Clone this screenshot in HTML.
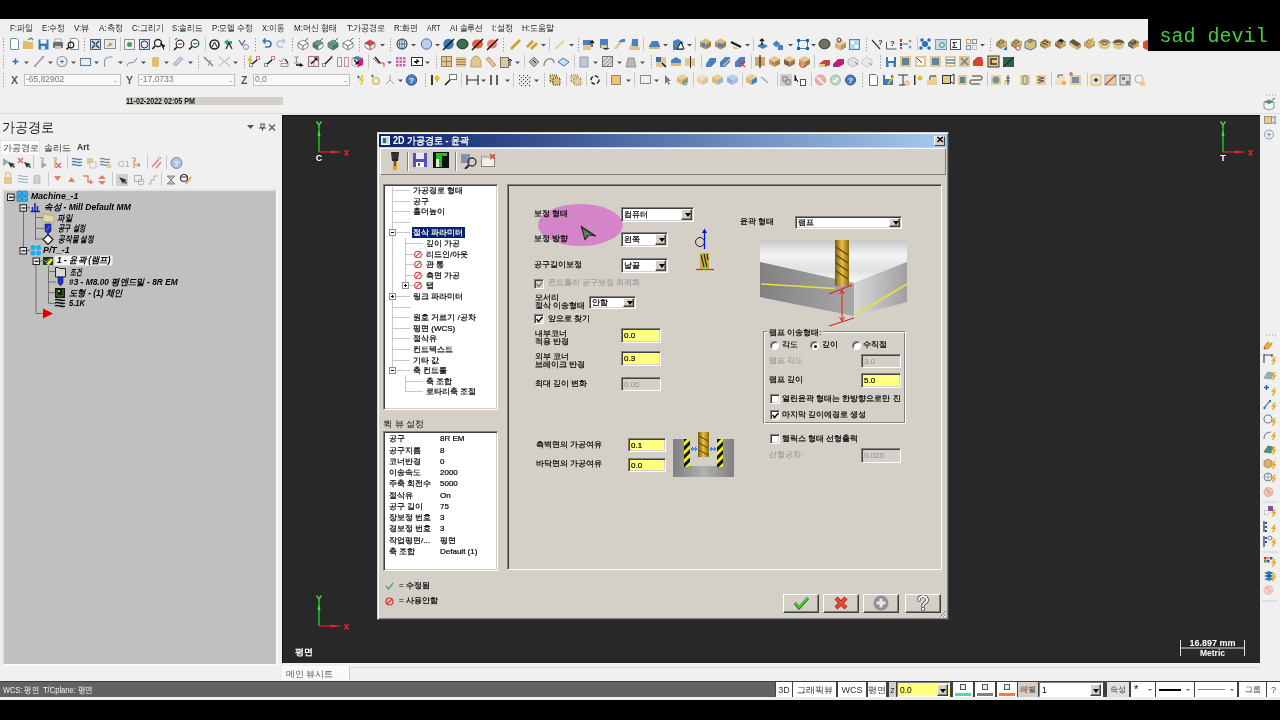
<!DOCTYPE html>
<html><head><meta charset="utf-8">
<style>
*{margin:0;padding:0;box-sizing:border-box}
html,body{width:1280px;height:720px;overflow:hidden;background:#000;font-family:"Liberation Sans",sans-serif;}
.a{position:absolute}
#app{position:absolute;left:0;top:19px;width:1280px;height:681px;background:#f0f0f0;overflow:hidden}
.menu span{position:absolute;top:5px;font-size:9px;color:#222;white-space:nowrap}
.t{position:absolute;white-space:nowrap}
.dt{font-size:8px;color:#000;line-height:12px;-webkit-text-stroke:0.2px currentColor}
.fld{border:1px solid;border-color:#808080 #fff #fff #808080;box-shadow:inset 1px 1px 0 #404040,inset -1px -1px 0 #d4d0c8}
.cbb{background:#d4d0c8;border:1px solid;border-color:#fff #404040 #404040 #fff;box-shadow:inset -1px -1px 0 #808080}
.lt{font-size:9px;font-weight:bold;font-style:italic;color:#000;line-height:12px}
.btn{background:#d4d0c8;border:1px solid;border-color:#fff #404040 #404040 #fff;box-shadow:inset -1px -1px 0 #808080}
</style></head><body>
<div id="app">
  <!-- menu -->
  </div>
<!-- TOOLBAR --><svg class="a" style="left:0;top:0" width="1280" height="100" viewBox="0 0 1280 100"><rect x="3" y="38" width="1" height="1.2" fill="#909090"/><rect x="3" y="41" width="1" height="1.2" fill="#909090"/><rect x="3" y="44" width="1" height="1.2" fill="#909090"/><rect x="3" y="47" width="1" height="1.2" fill="#909090"/><rect x="3" y="50" width="1" height="1.2" fill="#909090"/><path d="M10.5 38.5h6l2 2v9h-8z" fill="#fff" stroke="#7090a8"/><path d="M23 41h4l1 1h5v7h-10z" fill="#e8b860"/><path d="M28 40l3-2 2 2" stroke="#30a050" fill="none" stroke-width="1.3"/><rect x="38.5" y="39.5" width="10" height="10" fill="#3a78b8"/><rect x="40.5" y="39.5" width="6" height="4" fill="#fff"/><rect x="41" y="46" width="4" height="3.5" fill="#e8e8e8"/><rect x="53" y="42" width="10" height="6" rx="1" fill="#707070"/><rect x="55" y="39" width="6" height="3" fill="#fff" stroke="#777" stroke-width="0.6"/><rect x="55" y="46" width="6" height="3" fill="#c8c8c8"/><path d="M70.5 38.5h6l2 2v9h-8z" fill="#fff" stroke="#8090a0"/><circle cx="71" cy="45" r="2.8" fill="none" stroke="#222" stroke-width="1.2"/><path d="M69 47l-2.5 2.5" stroke="#111" stroke-width="1.5"/><rect x="84" y="38" width="1" height="1.2" fill="#909090"/><rect x="84" y="41" width="1" height="1.2" fill="#909090"/><rect x="84" y="44" width="1" height="1.2" fill="#909090"/><rect x="84" y="47" width="1" height="1.2" fill="#909090"/><rect x="84" y="50" width="1" height="1.2" fill="#909090"/><rect x="90.5" y="39.5" width="10" height="10" fill="#c8d8e8" stroke="#506070"/><path d="M92 41l3 3M99 41l-3 3M92 48l3-3M99 48l-3-3" stroke="#203040" stroke-width="1.2"/><rect x="104.5" y="39.5" width="11" height="9" fill="#e8e8e8" stroke="#8090a0"/><path d="M107 47l3-5 3 3" fill="#c8a050"/><rect x="120" y="37" width="1" height="14" fill="#c8c8c8"/><rect x="124.5" y="39.5" width="10" height="10" fill="none" stroke="#333" stroke-dasharray="1 1"/><circle cx="129.5" cy="44.5" r="2.5" fill="#40a060"/><rect x="139.5" y="39.5" width="10" height="10" fill="#e0e8f0" stroke="#506070"/><circle cx="144.5" cy="44.5" r="3.5" fill="none" stroke="#333"/><circle cx="158" cy="43" r="3.5" fill="#fff" stroke="#222" stroke-width="1.3"/><path d="M155 46l-2.5 3" stroke="#111" stroke-width="1.5"/><path d="M160 43l5 3-2 1 1 3" fill="#111" stroke="#111" stroke-width="0.8"/><rect x="169" y="37" width="1" height="14" fill="#c8c8c8"/><circle cx="180" cy="44" r="3.8" fill="#fff" stroke="#333" stroke-width="1.2"/><rect x="178" y="43.5" width="4" height="1.2" fill="#e03030"/><path d="M177 47l-3 3" stroke="#111" stroke-width="1.5"/><path d="M175 40l2-2" stroke="#40a060" stroke-width="1.5"/><circle cx="195" cy="43.5" r="3.8" fill="#fff" stroke="#333" stroke-width="1.2"/><rect x="193" y="43" width="4" height="1.2" fill="#e03030"/><path d="M192 46.5l-3 3" stroke="#111" stroke-width="1.5"/><rect x="205" y="37" width="1" height="14" fill="#c8c8c8"/><circle cx="214.5" cy="44.5" r="4.5" fill="none" stroke="#222" stroke-width="1.5"/><path d="M212 47l2.5-5 2.5 5" fill="none" stroke="#222"/><path d="M224 42l4-3v2h4v3h-4v2z" fill="#40a080"/><path d="M226 49l3-6 3 6" fill="none" stroke="#203050" stroke-width="1.3"/><path d="M239 40l3 5 3-5" fill="none" stroke="#506080" stroke-width="1.2"/><circle cx="246" cy="47" r="2.5" fill="none" stroke="#8090a0"/><rect x="255" y="38" width="1" height="1.2" fill="#909090"/><rect x="255" y="41" width="1" height="1.2" fill="#909090"/><rect x="255" y="44" width="1" height="1.2" fill="#909090"/><rect x="255" y="47" width="1" height="1.2" fill="#909090"/><rect x="255" y="50" width="1" height="1.2" fill="#909090"/><path d="M263 41h5a3 3 0 0 1 0 6h-3M263 41l2.5-2.5M263 41l2.5 2.5" fill="none" stroke="#3a70b0" stroke-width="1.6"/><path d="M285 41h-5a3 3 0 0 0 0 6h3M285 41l-2.5-2.5M285 41l-2.5 2.5" fill="none" stroke="#b0c0d0" stroke-width="1.4"/><rect x="292" y="38" width="1" height="1.2" fill="#909090"/><rect x="292" y="41" width="1" height="1.2" fill="#909090"/><rect x="292" y="44" width="1" height="1.2" fill="#909090"/><rect x="292" y="47" width="1" height="1.2" fill="#909090"/><rect x="292" y="50" width="1" height="1.2" fill="#909090"/><path d="M298 43.0L303.0 40.0L308 43.0L303.0 46.0Z" fill="#fff" stroke="#607080" stroke-width="0.8"/><path d="M298 43.0L303.0 46.0V50.0L298 47.0Z" fill="#fff" stroke="#607080" stroke-width="0.8"/><path d="M308 43.0L303.0 46.0V50.0L308 47.0Z" fill="#fff" stroke="#607080" stroke-width="0.8"/><path d="M305 41l3-3" stroke="#307050" stroke-width="1"/><path d="M313 43.0L318.0 40.0L323 43.0L318.0 46.0Z" fill="#60a080" stroke="#607080" stroke-width="0.8"/><path d="M313 43.0L318.0 46.0V50.0L313 47.0Z" fill="#408060" stroke="#607080" stroke-width="0.8"/><path d="M323 43.0L318.0 46.0V50.0L323 47.0Z" fill="#fff" stroke="#607080" stroke-width="0.8"/><path d="M320 41l3-3" stroke="#307050" stroke-width="1"/><path d="M328 43.0L333.0 40.0L338 43.0L333.0 46.0Z" fill="#60a080" stroke="#607080" stroke-width="0.8"/><path d="M328 43.0L333.0 46.0V50.0L328 47.0Z" fill="#60a080" stroke="#607080" stroke-width="0.8"/><path d="M338 43.0L333.0 46.0V50.0L338 47.0Z" fill="#408060" stroke="#607080" stroke-width="0.8"/><path d="M335 41l3-3" stroke="#307050" stroke-width="1"/><path d="M343 43.0L348.0 40.0L353 43.0L348.0 46.0Z" fill="#fff" stroke="#607080" stroke-width="0.8"/><path d="M343 43.0L348.0 46.0V50.0L343 47.0Z" fill="#fff" stroke="#607080" stroke-width="0.8"/><path d="M353 43.0L348.0 46.0V50.0L353 47.0Z" fill="#fff" stroke="#607080" stroke-width="0.8"/><path d="M350 41l3-3" stroke="#307050" stroke-width="1"/><rect x="359" y="38" width="1" height="1.2" fill="#909090"/><rect x="359" y="41" width="1" height="1.2" fill="#909090"/><rect x="359" y="44" width="1" height="1.2" fill="#909090"/><rect x="359" y="47" width="1" height="1.2" fill="#909090"/><rect x="359" y="50" width="1" height="1.2" fill="#909090"/><path d="M365 43.0L370.0 40.0L375 43.0L370.0 46.0Z" fill="#e04030" stroke="#806060" stroke-width="0.8"/><path d="M365 43.0L370.0 46.0V50.0L365 47.0Z" fill="#fff" stroke="#806060" stroke-width="0.8"/><path d="M375 43.0L370.0 46.0V50.0L375 47.0Z" fill="#e8e8e8" stroke="#806060" stroke-width="0.8"/><path d="M380 44h5l-2.5 2.5z" fill="#505050"/><rect x="390" y="38" width="1" height="1.2" fill="#909090"/><rect x="390" y="41" width="1" height="1.2" fill="#909090"/><rect x="390" y="44" width="1" height="1.2" fill="#909090"/><rect x="390" y="47" width="1" height="1.2" fill="#909090"/><rect x="390" y="50" width="1" height="1.2" fill="#909090"/><circle cx="402" cy="44" r="5" fill="#e0ecf4" stroke="#405870" stroke-width="1.2"/><path d="M397 44h10M402 39v10" stroke="#405870" stroke-width="0.8"/><ellipse cx="402" cy="44" rx="2.5" ry="5" fill="none" stroke="#405870" stroke-width="0.8"/><path d="M411 44h5l-2.5 2.5z" fill="#505050"/><circle cx="426.5" cy="44" r="5.2" fill="#b8d0ec" stroke="#5070a0" stroke-width="1"/><path d="M435 44h5l-2.5 2.5z" fill="#505050"/><circle cx="448.5" cy="44" r="5.2" fill="#3a78b8"/><path d="M443 50l11-11" stroke="#111" stroke-width="1.4"/><ellipse cx="462.5" cy="44" rx="5.5" ry="4.8" fill="#3a7050" stroke="#302010" stroke-width="1"/><ellipse cx="477.5" cy="44" rx="5.5" ry="4.5" fill="#e06040"/><path d="M472 50l11-11" stroke="#111" stroke-width="1.4"/><ellipse cx="492" cy="44" rx="5" ry="4.5" fill="#e88070"/><path d="M487 50l11-11" stroke="#111" stroke-width="1.4"/><rect x="503" y="38" width="1" height="1.2" fill="#909090"/><rect x="503" y="41" width="1" height="1.2" fill="#909090"/><rect x="503" y="44" width="1" height="1.2" fill="#909090"/><rect x="503" y="47" width="1" height="1.2" fill="#909090"/><rect x="503" y="50" width="1" height="1.2" fill="#909090"/><path d="M511 49L520 40" stroke="#d0a020" stroke-width="2.5"/><path d="M527 47L533 41" stroke="#d0a020" stroke-width="2.5"/><path d="M531 49L537 43" stroke="#d0a020" stroke-width="2.5"/><path d="M541 44h5l-2.5 2.5z" fill="#505050"/><rect x="549" y="37" width="1" height="14" fill="#c8c8c8"/><path d="M555 49L564 41" stroke="#e0d0a0" stroke-width="2.2"/><path d="M569 44h5l-2.5 2.5z" fill="#505050"/><rect x="578" y="38" width="1" height="1.2" fill="#909090"/><rect x="578" y="41" width="1" height="1.2" fill="#909090"/><rect x="578" y="44" width="1" height="1.2" fill="#909090"/><rect x="578" y="47" width="1" height="1.2" fill="#909090"/><rect x="578" y="50" width="1" height="1.2" fill="#909090"/><rect x="583" y="40" width="8" height="10" fill="#e0c890"/><rect x="583" y="40" width="8" height="5" fill="#4a80c0"/><path d="M592 47v-6l-2 2M592 41l2 2" stroke="#111" stroke-width="1.2" fill="none"/><rect x="600" y="39" width="8" height="9" fill="#4a80c0"/><path d="M602 48l4 2 4-2" fill="#333"/><rect x="601" y="45" width="6" height="3" fill="#e0c890"/><path d="M615 49l4-5 3-3" stroke="#e0c890" stroke-width="2.5"/><path d="M618 42l4-3h3v3z" fill="#4a80c0"/><path d="M629 50l3-10h5l3 10z" fill="#d8c090"/><rect x="632" y="39" width="6" height="7" fill="#4a80c0"/><rect x="643" y="37" width="1" height="14" fill="#c8c8c8"/><path d="M649 46l3-5h6l2 5v2h-11z" fill="#4a80c0"/><rect x="649" y="47" width="11" height="2" fill="#d8b878"/><path d="M663 44h5l-2.5 2.5z" fill="#505050"/><path d="M673 41l5-2 5 3v8h-10z" fill="#4a80c0"/><path d="M677 49l4-7 3 7z" fill="#fff" stroke="#111"/><path d="M687 44h5l-2.5 2.5z" fill="#505050"/><rect x="695" y="37" width="1" height="14" fill="#c8c8c8"/><path d="M700 41.5L705.5 38.5L711 41.5L705.5 44.5Z" fill="#d8b878"/><path d="M700 41.5L705.5 44.5V49.5L700 46.5Z" fill="#c09050"/><path d="M711 41.5L705.5 44.5V49.5L711 46.5Z" fill="#a07840"/><rect x="702" y="43" width="3" height="4" fill="#4a80c0"/><path d="M715 41.5L720.5 38.5L726 41.5L720.5 44.5Z" fill="#d8b878"/><path d="M715 41.5L720.5 44.5V49.5L715 46.5Z" fill="#c09050"/><path d="M726 41.5L720.5 44.5V49.5L726 46.5Z" fill="#a07840"/><rect x="718" y="43" width="3" height="4" fill="#4a80c0"/><path d="M731 42l10 5" stroke="#222" stroke-width="2.5"/><path d="M733 46l6 3h-5z" fill="#d8b878"/><path d="M745 44h5l-2.5 2.5z" fill="#505050"/><rect x="753" y="37" width="1" height="14" fill="#c8c8c8"/><path d="M757 46l5-3 6 3-5 3z" fill="#4a80c0"/><path d="M762 45v-6M760 41l2-2 2 2" stroke="#111" stroke-width="1.2" fill="none"/><path d="M773 43.5L776.5 40.5L780 43.5L776.5 46.5Z" fill="#4a80c0"/><path d="M773 43.5L776.5 46.5V47.5L773 44.5Z" fill="#3a70b0"/><path d="M780 43.5L776.5 46.5V47.5L780 44.5Z" fill="#5a90d0"/><rect x="778" y="45" width="5" height="5" fill="#4a80c0"/><path d="M788 44h5l-2.5 2.5z" fill="#505050"/><rect x="798.5" y="40.5" width="9" height="8" fill="none" stroke="#4a80c0" stroke-width="1"/><rect x="797" y="39" width="3" height="3" fill="#2a60a0"/><rect x="806" y="39" width="3" height="3" fill="#2a60a0"/><rect x="797" y="47" width="3" height="3" fill="#2a60a0"/><rect x="806" y="47" width="3" height="3" fill="#2a60a0"/><path d="M811 44h5l-2.5 2.5z" fill="#505050"/><ellipse cx="824.5" cy="44" rx="5.5" ry="4.8" fill="#707060" stroke="#333"/><path d="M835 42.5L840.5 39.5L846 42.5L840.5 45.5Z" fill="#e8d090"/><path d="M835 42.5L840.5 45.5V50.5L835 47.5Z" fill="#d8b878"/><path d="M846 42.5L840.5 45.5V50.5L846 47.5Z" fill="#b89858"/><circle cx="839" cy="40" r="2" fill="none" stroke="#333"/><rect x="849.5" y="39.5" width="10" height="10" fill="#b8d4ec" stroke="#6080a0"/><rect x="851" y="41" width="3" height="3" fill="#fff"/><rect x="855" y="45" width="3" height="3" fill="#fff"/><rect x="866" y="38" width="1" height="1.2" fill="#909090"/><rect x="866" y="41" width="1" height="1.2" fill="#909090"/><rect x="866" y="44" width="1" height="1.2" fill="#909090"/><rect x="866" y="47" width="1" height="1.2" fill="#909090"/><rect x="866" y="50" width="1" height="1.2" fill="#909090"/><path d="M872 40L880 49" stroke="#333" stroke-width="1.2"/><text x="878" y="45" font-size="8" font-family="Liberation Sans" font-weight="bold" fill="#333">?</text><path d="M886.5 42v7h10" fill="none" stroke="#555"/><text x="890" y="46" font-size="8" font-family="Liberation Sans" font-weight="bold" fill="#333">?</text><rect x="900" y="39" width="2" height="3" fill="#e03030"/><rect x="900" y="43" width="2" height="3" fill="#3050a0"/><rect x="900" y="47" width="2" height="2" fill="#e03030"/><path d="M903 44h5" stroke="#3070c0"/><circle cx="910" cy="41" r="1.5" fill="#999"/><circle cx="910" cy="47" r="1.5" fill="#999"/><rect x="917" y="37" width="1" height="14" fill="#c8c8c8"/><circle cx="925" cy="44" r="3" fill="#2a70c0"/><circle cx="922" cy="40" r="1.8" fill="#2a70c0"/><circle cx="929" cy="40" r="1.8" fill="#2a70c0"/><circle cx="921" cy="48" r="1.8" fill="#2a70c0"/><circle cx="929" cy="48" r="1.8" fill="#2a70c0"/><rect x="935.5" y="39.5" width="11" height="10" fill="#c8d8e8" stroke="#8098b0"/><circle cx="942" cy="45" r="2.5" fill="none" stroke="#40a060"/><rect x="950.5" y="39.5" width="10" height="10" fill="#fff" stroke="#555"/><text x="952" y="48" font-size="9" font-family="Liberation Sans" font-weight="bold" fill="#333">Σ</text><rect x="966.5" y="39.5" width="4" height="4" fill="none" stroke="#c8a060"/><rect x="972.5" y="39.5" width="4" height="4" fill="none" stroke="#7090b0"/><rect x="966.5" y="45.5" width="4" height="4" fill="none" stroke="#7090b0"/><rect x="972.5" y="45.5" width="4" height="4" fill="none" stroke="#c0c0c0"/><path d="M980 44h5l-2.5 2.5z" fill="#505050"/><rect x="990" y="38" width="1" height="1.2" fill="#909090"/><rect x="990" y="41" width="1" height="1.2" fill="#909090"/><rect x="990" y="44" width="1" height="1.2" fill="#909090"/><rect x="990" y="47" width="1" height="1.2" fill="#909090"/><rect x="990" y="50" width="1" height="1.2" fill="#909090"/><path d="M996 43l5-4 6 3-5 4z" fill="#d8c078" stroke="#706030" stroke-width="0.5"/><path d="M996 43v3l5 3v-3z" fill="#a88848"/><path d="M1001 46v3l6-3v-3z" fill="#c8a860"/><path d="M998 42.5l3-2 3 1.5-3 2z" fill="none" stroke="#403818" stroke-width="0.8"/><path d="M1003 50l4-4v4z" fill="#3a68b0"/><path d="M1011 43l5-4 6 3-5 4z" fill="#d8c078" stroke="#706030" stroke-width="0.5"/><path d="M1011 43v3l5 3v-3z" fill="#a88848"/><path d="M1016 46v3l6-3v-3z" fill="#c8a860"/><path d="M1013 42.5l3-2 3 1.5-3 2z" fill="none" stroke="#403818" stroke-width="0.8"/><circle cx="1018" cy="48" r="2.2" fill="#fff" stroke="#e03030" stroke-width="1"/><path d="M1025 42l5-3 6 2v6l-5 3-6-2z" fill="#d8c078" stroke="#4a6a90" stroke-width="0.9"/><path d="M1027 42l4-2 3 1-4 2z" fill="#8a7a40"/><path d="M1040 43l5-4 6 3-5 4z" fill="#d8c078" stroke="#706030" stroke-width="0.5"/><path d="M1040 43v3l5 3v-3z" fill="#a88848"/><path d="M1045 46v3l6-3v-3z" fill="#c8a860"/><path d="M1042 42.5l3-2 3 1.5-3 2z" fill="none" stroke="#403818" stroke-width="0.8"/><path d="M1042 43l6 2M1044 41l6 2" stroke="#403818" stroke-width="0.6"/><path d="M1055 43l5-4 6 3-5 4z" fill="#c8b070" stroke="#706030" stroke-width="0.5"/><path d="M1055 43v3l5 3v-3z" fill="#907040"/><path d="M1060 46v3l6-3v-3z" fill="#c8a860"/><path d="M1057 42.5l3-2 3 1.5-3 2z" fill="none" stroke="#403818" stroke-width="0.8"/><path d="M1058 41l3-2 3 1.5-3 2z" fill="#222"/><path d="M1069 42l4-3 8 5-4 3z" fill="#605838"/><path d="M1069 42v3l8 5v-3z" fill="#d8c078"/><path d="M1077 47v3l4-3v-3z" fill="#b89858"/><path d="M1084 43l5-4 6 3-5 4z" fill="#e8d090" stroke="#706030" stroke-width="0.5"/><path d="M1084 43v3l5 3v-3z" fill="#c0a060"/><path d="M1089 46v3l6-3v-3z" fill="#c8a860"/><path d="M1086 42.5l3-2 3 1.5-3 2z" fill="none" stroke="#806030" stroke-width="0.8"/><path d="M1090 43l3-5" stroke="#e0b020" stroke-width="1.6"/><ellipse cx="1104.5" cy="43" rx="5.5" ry="3.2" fill="#c8b078" stroke="#504828" stroke-width="0.7"/><path d="M1099 43v3a5.5 3.2 0 0 0 11 0v-3" fill="#e0c888"/><ellipse cx="1104.5" cy="43" rx="3" ry="1.6" fill="none" stroke="#404040" stroke-width="0.8"/><ellipse cx="1118.5" cy="43" rx="5.5" ry="3.2" fill="#807050" stroke="#404030" stroke-width="0.7"/><path d="M1113 43v3a5.5 3.2 0 0 0 11 0v-3" fill="#e0c888"/><ellipse cx="1118.5" cy="43" rx="3.5" ry="1.8" fill="none" stroke="#202020" stroke-width="0.8" stroke-dasharray="1 0.6"/><path d="M1128 43l5-4 6 3-5 4z" fill="#8a8468" stroke="#706030" stroke-width="0.5"/><path d="M1128 43v3l5 3v-3z" fill="#706850"/><path d="M1133 46v3l6-3v-3z" fill="#c8a860"/><path d="M1130 42.5l3-2 3 1.5-3 2z" fill="none" stroke="#202020" stroke-width="0.8"/><path d="M1131 42l3-2" stroke="#ddd" stroke-width="0.6"/><path d="M1143 42l4-2 4 2v6l-4 2-4-2z" fill="#e05030"/><rect x="3" y="55.5" width="1" height="1.2" fill="#909090"/><rect x="3" y="58.5" width="1" height="1.2" fill="#909090"/><rect x="3" y="61.5" width="1" height="1.2" fill="#909090"/><rect x="3" y="64.5" width="1" height="1.2" fill="#909090"/><rect x="3" y="67.5" width="1" height="1.2" fill="#909090"/><path d="M15.5 58.5v6M12.5 61.5h6" stroke="#2a70c0" stroke-width="1.6"/><path d="M24 61.5h5l-2.5 2.5z" fill="#505050"/><path d="M35 66L43 57" stroke="#909090" stroke-width="1.2"/><circle cx="35" cy="66" r="1" fill="#7090b0"/><circle cx="43" cy="57" r="1" fill="#7090b0"/><path d="M48 61.5h5l-2.5 2.5z" fill="#505050"/><circle cx="62" cy="61.5" r="5" fill="none" stroke="#8098b0" stroke-width="1.1"/><path d="M62 59.5v4M60 61.5h4" stroke="#5070a0"/><path d="M71 61.5h5l-2.5 2.5z" fill="#505050"/><rect x="80.5" y="58.5" width="10" height="7" fill="none" stroke="#6080a0" stroke-width="1.1"/><path d="M94 61.5h5l-2.5 2.5z" fill="#505050"/><path d="M104.5 67v-5a5 5 0 0 1 5-5h3" fill="none" stroke="#8098b0" stroke-width="1.1"/><path d="M118 61.5h5l-2.5 2.5z" fill="#505050"/><path d="M127 66c3-8 5 2 10-8" fill="none" stroke="#8098b0" stroke-width="1.1"/><path d="M141 61.5h5l-2.5 2.5z" fill="#505050"/><rect x="152" y="57" width="7" height="10" rx="2" fill="#e0c070"/><path d="M164 61.5h5l-2.5 2.5z" fill="#505050"/><path d="M173 64l7-7 3 2-7 7z" fill="#c0d0e0" stroke="#90a0b0" stroke-width="0.8"/><path d="M188 61.5h5l-2.5 2.5z" fill="#505050"/><rect x="198" y="55.5" width="1" height="1.2" fill="#909090"/><rect x="198" y="58.5" width="1" height="1.2" fill="#909090"/><rect x="198" y="61.5" width="1" height="1.2" fill="#909090"/><rect x="198" y="64.5" width="1" height="1.2" fill="#909090"/><rect x="198" y="67.5" width="1" height="1.2" fill="#909090"/><path d="M204 57L213 66" stroke="#a08060" stroke-width="1.6"/><path d="M208 66L211 60" stroke="#909090" stroke-width="1"/><path d="M219 57L230 66" stroke="#d0a080" stroke-width="1"/><path d="M230 57L219 66" stroke="#d0a080" stroke-width="1"/><path d="M233 61.5h5l-2.5 2.5z" fill="#505050"/><rect x="244" y="55.5" width="1" height="1.2" fill="#909090"/><rect x="244" y="58.5" width="1" height="1.2" fill="#909090"/><rect x="244" y="61.5" width="1" height="1.2" fill="#909090"/><rect x="244" y="64.5" width="1" height="1.2" fill="#909090"/><rect x="244" y="67.5" width="1" height="1.2" fill="#909090"/><path d="M251 56l-2 4h2l-1 3" stroke="#d8c020" stroke-width="2" fill="none"/><rect x="249.5" y="63.5" width="3" height="3" fill="none" stroke="#8898a8"/><rect x="256.5" y="56.5" width="3" height="3" fill="none" stroke="#d07898"/><path d="M252 64l5-4" stroke="#111" stroke-width="1.4"/><rect x="264.5" y="63.5" width="3" height="3" fill="none" stroke="#8898a8"/><rect x="271.5" y="56.5" width="3" height="3" fill="none" stroke="#d07898"/><path d="M267 64l5-4" stroke="#111" stroke-width="1.4"/><path d="M279 60l2 2 3-4" fill="none" stroke="#d07898" stroke-width="1"/><path d="M281 63.5h7v3h-7z" fill="none" stroke="#8898a8"/><path d="M285 59l3 4" stroke="#111" stroke-width="1.2"/><path d="M294 57h5M296.5 57v6M294 63h5" stroke="#8898a8" stroke-width="1.2"/><path d="M296 65h6l-2-1.5M302 65l-2 1.5" stroke="#111" stroke-width="1.3" fill="none"/><rect x="308.5" y="56.5" width="10" height="10" fill="none" stroke="#b07080" stroke-width="1.1"/><path d="M309 62h5v4" fill="none" stroke="#8898a8"/><path d="M311 64l6-6M314 58h3v3" stroke="#111" stroke-width="1.2" fill="none"/><rect x="322.5" y="63.5" width="3" height="3" fill="none" stroke="#8898a8"/><path d="M325 64l7-7" stroke="#111" stroke-width="1.3"/><path d="M330 57l3-1" stroke="#d07898" stroke-width="1.2"/><rect x="337.5" y="57.5" width="4" height="9" fill="none" stroke="#a090b8"/><rect x="344.5" y="57.5" width="4" height="9" fill="none" stroke="#c890a8"/><path d="M352 58l5-2 6 2-5 2z" fill="#4a80c0"/><path d="M352 58l6 2v7l-6-2z" fill="#fff" stroke="#333" stroke-width="0.4"/><path d="M363 58l-5 2v7l5-2z" fill="#c02870"/><path d="M354 60l4 4M358 64h-3M358 64v-3" stroke="#111" stroke-width="1.2" fill="none"/><rect x="368" y="54.5" width="1" height="14" fill="#c8c8c8"/><path d="M373 58l5 5h6v4" fill="none" stroke="#c04070" stroke-width="1"/><path d="M375 57l5 6" stroke="#111" stroke-width="1.3"/><path d="M387 61.5h5l-2.5 2.5z" fill="#505050"/><rect x="396.0" y="57.0" width="2.5" height="2.5" fill="#d060b0"/><rect x="396.0" y="60.5" width="2.5" height="2.5" fill="#d060b0"/><rect x="396.0" y="64.0" width="2.5" height="2.5" fill="#d060b0"/><rect x="399.5" y="57.0" width="2.5" height="2.5" fill="#d060b0"/><rect x="399.5" y="60.5" width="2.5" height="2.5" fill="#d060b0"/><rect x="399.5" y="64.0" width="2.5" height="2.5" fill="#d060b0"/><rect x="403.0" y="57.0" width="2.5" height="2.5" fill="#d060b0"/><rect x="403.0" y="60.5" width="2.5" height="2.5" fill="#d060b0"/><rect x="403.0" y="64.0" width="2.5" height="2.5" fill="#d060b0"/><rect x="411.5" y="57.5" width="11" height="8" fill="#fff" stroke="#333"/><path d="M414 61.5h5l-2-2v4z" fill="#111" stroke="#111"/><path d="M425 61.5h5l-2.5 2.5z" fill="#505050"/><rect x="436" y="55.5" width="1" height="1.2" fill="#909090"/><rect x="436" y="58.5" width="1" height="1.2" fill="#909090"/><rect x="436" y="61.5" width="1" height="1.2" fill="#909090"/><rect x="436" y="64.5" width="1" height="1.2" fill="#909090"/><rect x="436" y="67.5" width="1" height="1.2" fill="#909090"/><rect x="441.5" y="56.5" width="10" height="10" fill="#e0c890" stroke="#a08050"/><path d="M446.5 57v9M442 61.5h9" stroke="#a08050"/><rect x="456" y="57" width="10" height="10" fill="#e0c890"/><path d="M456 59.5h10M456 62h10M456 64.5h10" stroke="#a08050"/><path d="M471 67v-4a5 7 0 0 1 10 0v4z" fill="#e0c890" stroke="#b09060" stroke-width="0.8"/><path d="M486 59l3-2 7 8-3 2z" fill="#e8c0a0" stroke="#c08060" stroke-width="0.8"/><rect x="500.5" y="57.5" width="8" height="10" fill="#d8c8a8" stroke="#807060"/><path d="M510 66v-7M508 61l2-2 2 2" stroke="#222" fill="none"/><path d="M515 61.5h5l-2.5 2.5z" fill="#505050"/><rect x="524" y="54.5" width="1" height="14" fill="#c8c8c8"/><path d="M529 62l5-5 5 5-5 5z" fill="#b0b0b0" stroke="#707070" stroke-width="0.8"/><path d="M533 60l3 3" stroke="#333"/><path d="M544 66c0-8 10-10 10-3" fill="none" stroke="#909090" stroke-width="1.5"/><path d="M558 62l5-4 6 4-5 4z" fill="#d0e0f0" stroke="#3a70b0" stroke-width="1"/><rect x="574" y="54.5" width="1" height="14" fill="#c8c8c8"/><rect x="580" y="57" width="8" height="10" fill="#c0c8d0" stroke="#8090a0" stroke-width="0.8"/><path d="M593 61.5h5l-2.5 2.5z" fill="#505050"/><rect x="602.5" y="56.5" width="10" height="10" fill="#d8d8d0" stroke="#707070"/><path d="M603 66l9-9M603 62l5-5M607 66l5-5" stroke="#909080"/><path d="M617 61.5h5l-2.5 2.5z" fill="#505050"/><path d="M626 67l2-9h6l2 9z" fill="#b8b8b8" stroke="#888" stroke-width="0.8"/><path d="M640 61.5h5l-2.5 2.5z" fill="#505050"/><rect x="651" y="55.5" width="1" height="1.2" fill="#909090"/><rect x="651" y="58.5" width="1" height="1.2" fill="#909090"/><rect x="651" y="61.5" width="1" height="1.2" fill="#909090"/><rect x="651" y="64.5" width="1" height="1.2" fill="#909090"/><rect x="651" y="67.5" width="1" height="1.2" fill="#909090"/><rect x="656" y="57" width="10" height="10" fill="#e0c890"/><rect x="656" y="57" width="5" height="5" fill="#3a70b0"/><path d="M662 63l4 4" stroke="#111" stroke-width="1.5"/><path d="M671 60l5-3 5 3v6h-10z" fill="#4a80c0"/><rect x="671" y="63" width="10" height="3" fill="#d8b878"/><rect x="685" y="58" width="10" height="8" fill="#e0c890"/><path d="M690.5 56v12" stroke="#333"/><rect x="701" y="54.5" width="1" height="14" fill="#c8c8c8"/><path d="M706 64l4-6h6v4l-5 5h-5z" fill="#4a80c0"/><path d="M720 62l5-5h5v5l-5 5h-5z" fill="#4a80c0"/><path d="M723 66l7-7" stroke="#d8b878" stroke-width="1.5"/><path d="M735 62l5-5h5v5l-5 5h-5z" fill="#4a80c0"/><path d="M740 62l5 5M745 62l-5 5" stroke="#e03030" stroke-width="1.2"/><rect x="751" y="54.5" width="1" height="14" fill="#c8c8c8"/><rect x="755" y="57" width="10" height="9" fill="#c8a870"/><path d="M760 55v13" stroke="#223" stroke-width="1.2"/><path d="M769 59.0L774.5 56.0L780 59.0L774.5 62.0Z" fill="#e8c888"/><path d="M769 59.0L774.5 62.0V67.0L769 64.0Z" fill="#c8a060"/><path d="M780 59.0L774.5 62.0V67.0L780 64.0Z" fill="#a88040"/><path d="M772 62l2 2" stroke="#e03030"/><path d="M784 59.0L789.5 56.0L795 59.0L789.5 62.0Z" fill="#e8c888"/><path d="M784 59.0L789.5 62.0V67.0L784 64.0Z" fill="#806040"/><path d="M795 59.0L789.5 62.0V67.0L795 64.0Z" fill="#a88040"/><path d="M790 65l4-3" stroke="#6060c0"/><path d="M799 59.0L804.5 56.0L810 59.0L804.5 62.0Z" fill="#e8c888"/><path d="M799 59.0L804.5 62.0V67.0L799 64.0Z" fill="#c8a060"/><path d="M810 59.0L804.5 62.0V67.0L810 64.0Z" fill="#a88040"/><path d="M800 63a3 3 0 0 0 6 2" fill="none" stroke="#e04020" stroke-width="1.3"/><rect x="814" y="54.5" width="1" height="14" fill="#c8c8c8"/><path d="M819 64l5-4h6v5l-5 2h-6z" fill="#d04040"/><path d="M819 64h6v3h-6z" fill="#e8c888"/><path d="M833 64l5-5h6v5l-5 3h-6z" fill="#c02070"/><path d="M848 60l5-3 5 3v4l-5 3-5-3z" fill="#e0e0e0" stroke="#b0b0b0" stroke-width="0.8"/><path d="M855 62l3 3" stroke="#7070c0"/><path d="M862 60l5-3 5 3v4l-5 3-5-3z" fill="#e8e8e8" stroke="#c0c0c0" stroke-width="0.8"/><path d="M869 63l3 2" stroke="#8080d0"/><rect x="880" y="55.5" width="1" height="1.2" fill="#909090"/><rect x="880" y="58.5" width="1" height="1.2" fill="#909090"/><rect x="880" y="61.5" width="1" height="1.2" fill="#909090"/><rect x="880" y="64.5" width="1" height="1.2" fill="#909090"/><rect x="880" y="67.5" width="1" height="1.2" fill="#909090"/><rect x="886" y="57" width="10" height="10" fill="#3a78b8"/><rect x="888" y="57" width="6" height="4" fill="#fff"/><rect x="888.5" y="63" width="5" height="4" fill="#e8e8e8"/><rect x="900" y="56" width="11" height="11" fill="#e0c890"/><rect x="902" y="58" width="7" height="7" fill="#6080a0"/><rect x="915" y="56" width="11" height="11" fill="#e0c890"/><rect x="917" y="58" width="7" height="7" fill="#fff"/><rect x="930" y="56" width="11" height="11" fill="#e0c890"/><rect x="932" y="58" width="7" height="7" fill="#6080a0"/><rect x="945" y="56" width="11" height="11" fill="#e0c890"/><rect x="947" y="58" width="7" height="7" fill="#fff"/><path d="M917 58l5 5" stroke="#333"/><path d="M946 60h9M946 63h9" stroke="#6080a0" stroke-width="1.5"/><rect x="959" y="56" width="11" height="11" fill="#e0c890"/><path d="M961 58l7 7M968 58l-7 7" stroke="#6080b0" stroke-width="1.5"/><path d="M973 61l4-4h5l1 4v5h-10z" fill="#d04830"/><rect x="988" y="56" width="11" height="11" fill="#e0c890" stroke="#403020"/><path d="M997 59h-6v5h6" fill="none" stroke="#403020" stroke-width="1.5"/><rect x="1003" y="57" width="11" height="10" fill="#306050"/><path d="M1003 67l11-10" stroke="#111" stroke-width="1"/><rect x="3" y="73.5" width="1" height="1.2" fill="#909090"/><rect x="3" y="76.5" width="1" height="1.2" fill="#909090"/><rect x="3" y="79.5" width="1" height="1.2" fill="#909090"/><rect x="3" y="82.5" width="1" height="1.2" fill="#909090"/><rect x="3" y="85.5" width="1" height="1.2" fill="#909090"/><text x="11" y="84" font-size="10.5" font-weight="bold" font-family="Liberation Sans" fill="#555">X</text><rect x="24.5" y="74.5" width="96" height="11" fill="#f8f8f8" stroke="#c0c0c0"/><text x="26" y="81.5" font-size="8.5" font-family="Liberation Sans" fill="#7a7a7a">-65,82902</text><path d="M114 81h3l-1.5 1.5z" fill="#aaa"/><text x="126" y="84" font-size="10.5" font-weight="bold" font-family="Liberation Sans" fill="#555">Y</text><rect x="138.5" y="74.5" width="96" height="11" fill="#f8f8f8" stroke="#c0c0c0"/><text x="140" y="81.5" font-size="8.5" font-family="Liberation Sans" fill="#7a7a7a">-17,0733</text><path d="M229 81h3l-1.5 1.5z" fill="#aaa"/><text x="241" y="84" font-size="10.5" font-weight="bold" font-family="Liberation Sans" fill="#555">Z</text><rect x="253.5" y="74.5" width="96" height="11" fill="#f8f8f8" stroke="#c0c0c0"/><text x="255" y="81.5" font-size="8.5" font-family="Liberation Sans" fill="#7a7a7a">0,0</text><path d="M344 81h3l-1.5 1.5z" fill="#aaa"/><path d="M357 77h3M358.5 75.5v3" stroke="#4070c0"/><path d="M363 75l-3 5h3l-2 5" fill="none" stroke="#e8c020" stroke-width="1.5"/><circle cx="376" cy="81" r="3.2" fill="none" stroke="#e0c070" stroke-width="1.8"/><path d="M371 76h3M372.5 74.5v3" stroke="#4070c0"/><path d="M390 80v-5M390 80l-4 4M390 80l4 4" stroke="#a0a0a0"/><path d="M398 79.5h5l-2.5 2.5z" fill="#505050"/><circle cx="411.5" cy="80" r="5.2" fill="#4a80c0" stroke="#305080"/><text x="409" y="83" font-size="8" font-weight="bold" font-family="Liberation Sans" fill="#fff">?</text><rect x="425" y="73.5" width="1" height="1.2" fill="#909090"/><rect x="425" y="76.5" width="1" height="1.2" fill="#909090"/><rect x="425" y="79.5" width="1" height="1.2" fill="#909090"/><rect x="425" y="82.5" width="1" height="1.2" fill="#909090"/><rect x="425" y="85.5" width="1" height="1.2" fill="#909090"/><rect x="431" y="75" width="2" height="10" fill="#333"/><circle cx="437" cy="78" r="2.5" fill="#e8c020"/><rect x="436" y="80" width="2" height="2" fill="#e8c020"/><rect x="449.5" y="74.5" width="7" height="5" fill="#fff" stroke="#777"/><path d="M445 85l5-5" stroke="#111" stroke-width="1.5"/><rect x="461" y="72.5" width="1" height="14" fill="#c8c8c8"/><path d="M467 75v10M478 75v10M467 80h11" stroke="#333" stroke-width="1.2"/><path d="M481 79.5h5l-2.5 2.5z" fill="#505050"/><path d="M491 75v10M497 75v10" stroke="#333" stroke-width="1.5"/><path d="M505 79.5h5l-2.5 2.5z" fill="#505050"/><rect x="513" y="72.5" width="1" height="14" fill="#c8c8c8"/><rect x="519" y="75" width="1.2" height="1.2" fill="#444"/><rect x="519" y="79" width="1.2" height="1.2" fill="#444"/><rect x="519" y="83" width="1.2" height="1.2" fill="#444"/><rect x="521" y="77" width="1.2" height="1.2" fill="#444"/><rect x="521" y="81" width="1.2" height="1.2" fill="#444"/><rect x="521" y="85" width="1.2" height="1.2" fill="#444"/><rect x="523" y="75" width="1.2" height="1.2" fill="#444"/><rect x="523" y="79" width="1.2" height="1.2" fill="#444"/><rect x="523" y="83" width="1.2" height="1.2" fill="#444"/><rect x="525" y="77" width="1.2" height="1.2" fill="#444"/><rect x="525" y="81" width="1.2" height="1.2" fill="#444"/><rect x="525" y="85" width="1.2" height="1.2" fill="#444"/><rect x="527" y="75" width="1.2" height="1.2" fill="#444"/><rect x="527" y="79" width="1.2" height="1.2" fill="#444"/><rect x="527" y="83" width="1.2" height="1.2" fill="#444"/><rect x="529" y="77" width="1.2" height="1.2" fill="#444"/><rect x="529" y="81" width="1.2" height="1.2" fill="#444"/><rect x="529" y="85" width="1.2" height="1.2" fill="#444"/><path d="M534 79.5h5l-2.5 2.5z" fill="#505050"/><rect x="544" y="73.5" width="1" height="1.2" fill="#909090"/><rect x="544" y="76.5" width="1" height="1.2" fill="#909090"/><rect x="544" y="79.5" width="1" height="1.2" fill="#909090"/><rect x="544" y="82.5" width="1" height="1.2" fill="#909090"/><rect x="544" y="85.5" width="1" height="1.2" fill="#909090"/><rect x="550" y="75" width="7" height="7" fill="#e0c070" stroke="#333" stroke-dasharray="1 1"/><rect x="553" y="78" width="7" height="7" fill="#e0c070" stroke="#333" stroke-dasharray="1 1"/><rect x="566" y="72.5" width="1" height="14" fill="#c8c8c8"/><rect x="571" y="75" width="7" height="7" fill="#e0d0a0" stroke="#8a7050" stroke-dasharray="1 1"/><rect x="574" y="78" width="7" height="7" fill="#e0d0a0" stroke="#8a7050" stroke-dasharray="1 1"/><rect x="586" y="72.5" width="1" height="14" fill="#c8c8c8"/><circle cx="595" cy="80" r="4" fill="none" stroke="#222" stroke-width="1.5" stroke-dasharray="4 2"/><rect x="606" y="72.5" width="1" height="14" fill="#c8c8c8"/><rect x="611.5" y="75.5" width="9" height="9" fill="#f0c070" stroke="#333" stroke-dasharray="1 1"/><path d="M626 79.5h5l-2.5 2.5z" fill="#505050"/><rect x="634" y="72.5" width="1" height="14" fill="#c8c8c8"/><rect x="640.5" y="75.5" width="10" height="8" fill="none" stroke="#222" stroke-dasharray="1 1"/><path d="M654 79.5h5l-2.5 2.5z" fill="#505050"/><path d="M665 75v9l2-2 2 3 1-1-2-3h3z" fill="#707880"/><path d="M677 77.0L682.5 74.0L688 77.0L682.5 80.0Z" fill="#e8d090"/><path d="M677 77.0L682.5 80.0V85.0L677 82.0Z" fill="#d8b878"/><path d="M688 77.0L682.5 80.0V85.0L688 82.0Z" fill="#b89858"/><circle cx="685" cy="83" r="2" fill="none" stroke="#40a0a0"/><rect x="693" y="72.5" width="1" height="14" fill="#c8c8c8"/><path d="M697 77.0L702.5 74.0L708 77.0L702.5 80.0Z" fill="#f0e0c0"/><path d="M697 77.0L702.5 80.0V85.0L697 82.0Z" fill="#e8d0a0"/><path d="M708 77.0L702.5 80.0V85.0L708 82.0Z" fill="#d8c090"/><path d="M712 77.0L717.5 74.0L723 77.0L717.5 80.0Z" fill="#e8d090"/><path d="M712 77.0L717.5 80.0V85.0L712 82.0Z" fill="#d8b878"/><path d="M723 77.0L717.5 80.0V85.0L723 82.0Z" fill="#9ab0c8"/><path d="M727 77.0L732.5 74.0L738 77.0L732.5 80.0Z" fill="#b8d0e8"/><path d="M727 77.0L732.5 80.0V85.0L727 82.0Z" fill="#90b0d8"/><path d="M738 77.0L732.5 80.0V85.0L738 82.0Z" fill="#a8c0e0"/><rect x="742" y="72.5" width="1" height="14" fill="#c8c8c8"/><path d="M746 77.0L751.5 74.0L757 77.0L751.5 80.0Z" fill="#e8d090"/><path d="M746 77.0L751.5 80.0V85.0L746 82.0Z" fill="#d8b878"/><path d="M757 77.0L751.5 80.0V85.0L757 82.0Z" fill="#4a80c0"/><path d="M761 77l3 2 4 4" stroke="#90b0c0" stroke-width="1.5"/><rect x="777" y="72.5" width="1" height="14" fill="#c8c8c8"/><rect x="780" y="74" width="12" height="12" fill="#d0d0d0"/><circle cx="785" cy="79" r="2.5" fill="none" stroke="#999" stroke-width="1.5"/><circle cx="788" cy="82" r="2.5" fill="none" stroke="#999" stroke-width="1.5"/><path d="M795 75v6l1.5-1.5 1.5 2.5" fill="#111" stroke="#111"/><rect x="800.5" y="79.5" width="5" height="6" fill="#fff" stroke="#555"/><rect x="811" y="72.5" width="1" height="14" fill="#c8c8c8"/><circle cx="820.5" cy="80" r="5" fill="#f0b0b0" stroke="#e09090"/><path d="M817 77l7 7" stroke="#fff" stroke-width="1.5"/><circle cx="835.5" cy="80" r="5" fill="#b8d8c8" stroke="#90b8a8"/><path d="M833 80l2 2 3-4" stroke="#fff" stroke-width="1.5" fill="none"/><circle cx="850.5" cy="80" r="5" fill="#4a80c0" stroke="#305080"/><text x="848" y="83" font-size="8" font-weight="bold" font-family="Liberation Sans" fill="#fff">?</text><rect x="862" y="73.5" width="1" height="1.2" fill="#909090"/><rect x="862" y="76.5" width="1" height="1.2" fill="#909090"/><rect x="862" y="79.5" width="1" height="1.2" fill="#909090"/><rect x="862" y="82.5" width="1" height="1.2" fill="#909090"/><rect x="862" y="85.5" width="1" height="1.2" fill="#909090"/><path d="M869.5 74.5h6l2 2v9h-8z" fill="#fff" stroke="#607080"/><rect x="883" y="75" width="10" height="10" fill="#3a78b8"/><rect x="885" y="75" width="6" height="4" fill="#fff"/><path d="M888 84l6-8" stroke="#e8c020" stroke-width="1.8"/><path d="M898 75h10M903 75v10M899 85h6" stroke="#333" stroke-width="1"/><circle cx="907" cy="83" r="2" fill="none" stroke="#e0a030"/><rect x="914" y="75" width="1.5" height="10" fill="#333"/><circle cx="920" cy="78" r="2.5" fill="#e8c020"/><path d="M927 85v-5h5v-5h5v10z" fill="#e8d090"/><path d="M930 80v-4h6" fill="none" stroke="#333"/><rect x="942.5" y="75.5" width="8" height="8" fill="#e8c888" stroke="#333"/><path d="M951 76l3-2v10l-3-2" fill="none" stroke="#333"/><rect x="958" y="75" width="9" height="10" fill="#e0c890"/><rect x="960" y="77" width="5" height="6" fill="#6080a0"/><path d="M972 76h8a2 2 0 0 1 0 4h-8a2 2 0 0 0 0 4h8" fill="none" stroke="#807060" stroke-width="1.3"/><rect x="987" y="72.5" width="1" height="14" fill="#c8c8c8"/><rect x="991" y="75" width="10" height="10" fill="#e8d090"/><circle cx="996" cy="80" r="3.5" fill="#7090b0"/><path d="M1008 85v-10M1006 78h4M1006 81h4" stroke="#555" stroke-width="1.2"/><rect x="1004" y="80" width="2" height="5" fill="#e8d090"/><rect x="1020" y="75" width="10" height="10" fill="#e8d090"/><rect x="1023" y="75.5" width="4" height="9" rx="2" fill="none" stroke="#6080a0"/><rect x="1036" y="75" width="10" height="10" fill="#e8d090"/><path d="M1038 77l6 1-6 2 6 1-6 2" fill="none" stroke="#555"/><rect x="1051" y="72.5" width="1" height="14" fill="#c8c8c8"/><path d="M1055 85v-6h4v-4h6v10z" fill="#f0e0c0"/><path d="M1058 78v-3h5" fill="none" stroke="#555"/><circle cx="1064" cy="83" r="2" fill="#e8b020"/><rect x="1070" y="75" width="11" height="10" fill="#e8d090"/><rect x="1072" y="77" width="7" height="6" fill="#7090b0"/><circle cx="1071" cy="74" r="1.3" fill="none" stroke="#e03030"/><rect x="1087" y="72.5" width="1" height="14" fill="#c8c8c8"/><rect x="1091" y="75" width="10" height="10" fill="#f0e0c0" stroke="#d8b878"/><path d="M1096 78v4M1094 80h4" stroke="#203070" stroke-width="1.5"/><rect x="1105" y="75" width="11" height="10" fill="#e0d0b0" stroke="#a0a0a0"/><path d="M1105 85l11-10" stroke="#d04030" stroke-width="1.2"/><rect x="1120" y="75" width="10" height="10" fill="#d8d8d8" stroke="#707070"/><rect x="1122" y="77" width="3" height="3" fill="#6080a0"/><rect x="1126" y="81" width="3" height="3" fill="#6080a0"/><circle cx="1139" cy="79" r="4" fill="#f0f0f0" stroke="#b0b0b0"/><rect x="1140" y="81" width="5" height="5" rx="2" fill="#f0c880"/></svg><!-- /TOOLBAR -->
<!-- date bar -->
<div class="a" style="left:126px;top:97px;width:157px;height:8px;background:#d4d0c8"></div>
<div class="a" style="left:0;top:113px;width:1280px;height:1px;background:#dedede"></div>
<div class="t" style="left:126px;top:96px;font-size:8.5px;font-weight:bold;line-height:10px;color:#111;transform:scaleX(0.839);transform-origin:0 0">11-02-2022 02:05 PM</div>

<!-- left panel -->
<div class="t" style="left:2px;top:119px;font-size:14px;color:#222;transform:scaleX(0.94);transform-origin:0 0">가공경로</div>
<div class="a" style="left:0;top:140px;width:40px;height:14px;background:#fcfcfc;border:1px solid #e4e4e4;border-bottom:none"></div>
<div class="t" style="left:3px;top:142px;font-size:9px;color:#333">가공경로</div>
<div class="t" style="left:43.5px;top:142px;font-size:9px;color:#333">솔리드</div>
<div class="t" style="left:77px;top:142px;font-size:8.5px;font-weight:bold;color:#333">Art</div>
<div class="a" style="left:2px;top:189px;width:276px;height:477px;background:#c0c0c0;border:2px solid;border-color:#e4e4e4 #fafafa #fafafa #e4e4e4"></div>

<!-- viewport -->
<div class="a" style="left:282px;top:115px;width:978px;height:548px;background:#282828;border-top:1px solid #111;border-left:1px solid #111"></div>
<div class="a" style="left:283px;top:667px;width:977px;height:1px;background:#ddd"></div>

<!-- status bar -->
<div class="a" style="left:0;top:681px;width:1280px;height:16px;background:#626262;border-top:1px solid #3c3c3c"></div>
<div class="a" style="left:0;top:697px;width:1280px;height:3px;background:#ececec"></div>
<div class="t" style="left:2.5px;top:685px;font-size:9px;line-height:11px;color:#f4f4f4;transform:scaleX(0.818);transform-origin:0 0">WCS: 평면</div><div class="t" style="left:42.5px;top:685px;font-size:9px;line-height:11px;color:#f4f4f4;transform:scaleX(0.840);transform-origin:0 0">T/Cplane: 평면</div>

<!-- sad devil -->
<div class="a" style="left:1148px;top:0;width:132px;height:51px;background:#000"></div>
<div class="t" style="left:1159.5px;top:25px;font-family:'Liberation Mono',monospace;font-size:20px;line-height:24px;color:#48c848;">sad devil</div>


<!-- dialog -->
<div class="a" style="left:377px;top:132px;width:572px;height:488px;background:#d4d0c8;border:1px solid;border-color:#d4d0c8 #404040 #404040 #d4d0c8;box-shadow:inset 1px 1px 0 #fff,inset -1px -1px 0 #808080"></div>
<div class="a" style="left:379px;top:134px;width:568px;height:13px;background:linear-gradient(to right,#0a246a,#a6caf0)"></div>
<div class="a" style="left:381px;top:136px;width:9px;height:9px;background:#c0d8e8;border:1px solid #fff"><div class="a" style="left:1px;top:1px;width:3px;height:5px;background:#4a6a4a"></div></div>
<div class="t" style="left:393px;top:134px;font-size:10px;line-height:13px;font-weight:bold;color:#fff;transform:scaleX(0.90);transform-origin:0 0">2D 가공경로 - 윤곽</div>
<div class="a" style="left:934px;top:136px;width:11px;height:10px;background:#d4d0c8;border:1px solid;border-color:#fff #404040 #404040 #fff"><div class="t" style="left:1px;top:-3px;font-size:10px;font-weight:bold;color:#000">✕</div></div>

<!-- dialog toolbar -->
<div class="a" style="left:380px;top:148px;width:566px;height:27px;border:1px solid;border-color:#fff #808080 #808080 #fff"></div>
<div class="a" style="left:407px;top:152px;width:2px;height:19px;border-left:1px solid #808080;border-right:1px solid #fff"></div>
<div class="a" style="left:455px;top:152px;width:2px;height:19px;border-left:1px solid #808080;border-right:1px solid #fff"></div>
<svg class="a" style="left:388px;top:151px" width="14" height="20" viewBox="0 0 14 20"><path d="M3 1h8l-1 9H4z" fill="#222"/><path d="M4 3h6M4 5h6M4 7h6" stroke="#555" stroke-width="0.6"/><rect x="5" y="10" width="4" height="9" fill="#e0a020"/><rect x="6" y="10" width="2" height="5" fill="#555"/></svg>
<svg class="a" style="left:412px;top:152px" width="16" height="16" viewBox="0 0 16 16"><rect x="1" y="1" width="14" height="14" fill="#5050c0"/><rect x="4" y="1" width="8" height="6" fill="#e8e8f8"/><rect x="4" y="10" width="8" height="5" fill="#fff"/><rect x="6" y="11" width="2" height="3" fill="#5050c0"/></svg>
<svg class="a" style="left:433px;top:152px" width="16" height="16" viewBox="0 0 16 16"><rect x="0" y="0" width="16" height="16" fill="#111"/><path d="M3 1h11v3H9v11H6V7H3z" fill="#20c020"/><rect x="3" y="7" width="3" height="8" fill="#e0f0e0"/></svg>
<svg class="a" style="left:461px;top:154px" width="17" height="15" viewBox="0 0 17 15"><rect x="0" y="0" width="9" height="9" fill="#8090b0"/><circle cx="11" cy="8" r="4" fill="none" stroke="#333" stroke-width="1.3"/><path d="M8 11L4 15" stroke="#222" stroke-width="2"/></svg>
<svg class="a" style="left:481px;top:154px" width="15" height="13" viewBox="0 0 15 13"><rect x="0.5" y="2.5" width="13" height="10" fill="#f4f0e8" stroke="#888"/><rect x="0.5" y="2.5" width="13" height="2" fill="#ccc"/><path d="M9 0l5 5M14 0l-5 5" stroke="#e04040" stroke-width="1.5"/></svg>

<!-- tree box -->
<div class="a" style="left:383px;top:184px;width:115px;height:226px;background:#fff;border:1px solid;border-color:#808080 #fff #fff #808080;box-shadow:inset 1px 1px 0 #404040,inset -1px -1px 0 #d4d0c8"></div>
<div class="t" style="left:383px;top:418px;font-size:9px;color:#111">퀵 뷰 설정</div>
<div class="a" style="left:383px;top:431px;width:115px;height:140px;background:#fff;border:1px solid;border-color:#808080 #fff #fff #808080;box-shadow:inset 1px 1px 0 #404040,inset -1px -1px 0 #d4d0c8"></div>

<!-- DTREE --><svg class="a" style="left:0;top:0" width="500" height="420" viewBox="0 0 500 420"><path d="M392.5 187V370.5M405.5 238V285.5M405.5 375V391.5" stroke="#c8c8c8" fill="none"/><path d="M392 190.5H410" stroke="#c8c8c8"/><path d="M392 201.5H410" stroke="#c8c8c8"/><path d="M392 211.5H410" stroke="#c8c8c8"/><path d="M392 222.5H410" stroke="#c8c8c8"/><path d="M392 232.5H410" stroke="#c8c8c8"/><rect x="389.5" y="229.5" width="6" height="6" fill="#fff" stroke="#909090"/><path d="M391.0 232.5h3" stroke="#000"/><path d="M405 243.5H423" stroke="#c8c8c8"/><path d="M405 254.5H423" stroke="#c8c8c8"/><circle cx="418" cy="254.5" r="3.3" fill="#fff" stroke="#e04040" stroke-width="1.1"/><path d="M415.8 256.7L420.2 252.3" stroke="#e04040" stroke-width="1.1"/><path d="M405 264.5H423" stroke="#c8c8c8"/><circle cx="418" cy="264.5" r="3.3" fill="#fff" stroke="#e04040" stroke-width="1.1"/><path d="M415.8 266.7L420.2 262.3" stroke="#e04040" stroke-width="1.1"/><path d="M405 275.5H423" stroke="#c8c8c8"/><circle cx="418" cy="275.5" r="3.3" fill="#fff" stroke="#e04040" stroke-width="1.1"/><path d="M415.8 277.7L420.2 273.3" stroke="#e04040" stroke-width="1.1"/><path d="M405 285.5H423" stroke="#c8c8c8"/><rect x="402.5" y="282.5" width="6" height="6" fill="#fff" stroke="#909090"/><path d="M404.0 285.5h3" stroke="#000"/><path d="M405.5 284v3" stroke="#000"/><circle cx="418" cy="285.5" r="3.3" fill="#fff" stroke="#e04040" stroke-width="1.1"/><path d="M415.8 287.7L420.2 283.3" stroke="#e04040" stroke-width="1.1"/><path d="M392 296.5H410" stroke="#c8c8c8"/><rect x="389.5" y="293.5" width="6" height="6" fill="#fff" stroke="#909090"/><path d="M391.0 296.5h3" stroke="#000"/><path d="M392.5 295v3" stroke="#000"/><path d="M392 307.5H410" stroke="#c8c8c8"/><path d="M392 317.5H410" stroke="#c8c8c8"/><path d="M392 328.5H410" stroke="#c8c8c8"/><path d="M392 338.5H410" stroke="#c8c8c8"/><path d="M392 349.5H410" stroke="#c8c8c8"/><path d="M392 360.5H410" stroke="#c8c8c8"/><path d="M392 370.5H410" stroke="#c8c8c8"/><rect x="389.5" y="367.5" width="6" height="6" fill="#fff" stroke="#909090"/><path d="M391.0 370.5h3" stroke="#000"/><path d="M405 381.5H423" stroke="#c8c8c8"/><path d="M405 391.5H423" stroke="#c8c8c8"/></svg>
<div class="t dt" style="left:413px;top:185px">가공경로 형태</div>
<div class="t dt" style="left:413px;top:196px">공구</div>
<div class="t dt" style="left:413px;top:206px">홀더높이</div>
<div class="a" style="left:412px;top:227px;width:53px;height:11px;background:#0a246a"></div>
<div class="t dt" style="left:413px;top:227px;color:#fff">절삭 파라미터</div>
<div class="t dt" style="left:426px;top:238px">깊이 가공</div>
<div class="t dt" style="left:426px;top:249px">리드인/아웃</div>
<div class="t dt" style="left:426px;top:259px">관 통</div>
<div class="t dt" style="left:426px;top:270px">측면 가공</div>
<div class="t dt" style="left:426px;top:280px">탭</div>
<div class="t dt" style="left:413px;top:291px">링크 파라미터</div>
<div class="t dt" style="left:413px;top:312px">원호 거르기 /공차</div>
<div class="t dt" style="left:413px;top:323px">평면 (WCS)</div>
<div class="t dt" style="left:413px;top:333px">절삭유</div>
<div class="t dt" style="left:413px;top:344px">컨트텍스트</div>
<div class="t dt" style="left:413px;top:355px">기타 값</div>
<div class="t dt" style="left:413px;top:365px">축 컨트롤</div>
<div class="t dt" style="left:426px;top:376px">축 조합</div>
<div class="t dt" style="left:426px;top:386px">로타리축 조절</div>
<div class="t dt" style="left:389px;top:433px">공구</div>
<div class="t dt" style="left:440px;top:433px">8R EM</div>
<div class="t dt" style="left:389px;top:445px">공구지름</div>
<div class="t dt" style="left:440px;top:445px">8</div>
<div class="t dt" style="left:389px;top:456px">코너반경</div>
<div class="t dt" style="left:440px;top:456px">0</div>
<div class="t dt" style="left:389px;top:467px">이송속도</div>
<div class="t dt" style="left:440px;top:467px">2000</div>
<div class="t dt" style="left:389px;top:478px">주축 회전수</div>
<div class="t dt" style="left:440px;top:478px">5000</div>
<div class="t dt" style="left:389px;top:490px">절삭유</div>
<div class="t dt" style="left:440px;top:490px">On</div>
<div class="t dt" style="left:389px;top:501px">공구 길이</div>
<div class="t dt" style="left:440px;top:501px">75</div>
<div class="t dt" style="left:389px;top:512px">장보정 번호</div>
<div class="t dt" style="left:440px;top:512px">3</div>
<div class="t dt" style="left:389px;top:523px">경보정 번호</div>
<div class="t dt" style="left:440px;top:523px">3</div>
<div class="t dt" style="left:389px;top:535px">작업평면/...</div>
<div class="t dt" style="left:440px;top:535px">평면</div>
<div class="t dt" style="left:389px;top:546px">축 조합</div>
<div class="t dt" style="left:440px;top:546px">Default (1)</div>
<svg class="a" style="left:385px;top:582px" width="9" height="8" viewBox="0 0 9 8"><path d="M1 4l2.5 3L8 1" fill="none" stroke="#50a050" stroke-width="1.3"/></svg>
<div class="t dt" style="left:399px;top:580px">= 수정됨</div>
<svg class="a" style="left:385px;top:597px" width="9" height="9" viewBox="0 0 9 9"><circle cx="4.5" cy="4.5" r="3.5" fill="none" stroke="#e03030" stroke-width="1.2"/><path d="M2 7L7 2" stroke="#e03030" stroke-width="1.2"/></svg>
<div class="t dt" style="left:399px;top:595px">= 사용안함</div><!-- /DTREE -->
<!-- right panel -->
<div class="a" style="left:507px;top:184px;width:435px;height:386px;border:1px solid;border-color:#808080 #fff #fff #808080;box-shadow:inset 1px 1px 0 #404040,inset -1px -1px 0 #d4d0c8"></div>

<!-- form -->
<div class="t dt" style="left:534px;top:208px;color:#000">보정 형태</div>
<div class="a fld" style="left:621px;top:207px;width:73px;height:15px;background:#fff"><div class="t dt" style="left:2px;top:1px">컴퓨터</div><div class="a cbb" style="right:1px;top:1px;width:11px;height:11px"><div class="a" style="left:3px;top:3px;width:0;height:0;border-left:3.5px solid transparent;border-right:3.5px solid transparent;border-top:4px solid #000"></div></div></div>
<div class="t dt" style="left:534px;top:233px;color:#000">보정 방향</div>
<div class="a fld" style="left:621px;top:232px;width:47px;height:15px;background:#fff"><div class="t dt" style="left:2px;top:1px">왼쪽</div><div class="a cbb" style="right:1px;top:1px;width:11px;height:11px"><div class="a" style="left:3px;top:3px;width:0;height:0;border-left:3.5px solid transparent;border-right:3.5px solid transparent;border-top:4px solid #000"></div></div></div>
<div class="t dt" style="left:534px;top:259px;color:#000">공구길이보정</div>
<div class="a fld" style="left:621px;top:258px;width:47px;height:15px;background:#fff"><div class="t dt" style="left:2px;top:1px">날끝</div><div class="a cbb" style="right:1px;top:1px;width:11px;height:11px"><div class="a" style="left:3px;top:3px;width:0;height:0;border-left:3.5px solid transparent;border-right:3.5px solid transparent;border-top:4px solid #000"></div></div></div>
<div class="a fld" style="left:534px;top:279px;width:10px;height:10px;background:#d4d0c8"><svg class="a" style="left:1px;top:1px" width="7" height="7" viewBox="0 0 7 7"><path d="M0.5 3l2 2.5L6.5 1" fill="none" stroke="#808080" stroke-width="1.5"/></svg></div>
<div class="t dt" style="left:548px;top:277px;color:#a0a0a0">콘트롤러 공구보정 최적화</div>
<div class="t dt" style="left:535px;top:292px;color:#000">모서리</div>
<div class="t dt" style="left:535px;top:300px;color:#000">절삭 이송형태</div>
<div class="a fld" style="left:589px;top:296px;width:47px;height:13px;background:#fff"><div class="t dt" style="left:2px;top:0px">안함</div><div class="a cbb" style="right:1px;top:1px;width:11px;height:9px"><div class="a" style="left:3px;top:2px;width:0;height:0;border-left:3.5px solid transparent;border-right:3.5px solid transparent;border-top:4px solid #000"></div></div></div>
<div class="a fld" style="left:534px;top:314px;width:10px;height:10px;background:#fff"><svg class="a" style="left:1px;top:1px" width="7" height="7" viewBox="0 0 7 7"><path d="M0.5 3l2 2.5L6.5 1" fill="none" stroke="#000" stroke-width="1.5"/></svg></div>
<div class="t dt" style="left:548px;top:313px;color:#000">앞으로 찾기</div>
<div class="t dt" style="left:535px;top:328px;color:#000">내부코너</div>
<div class="t dt" style="left:535px;top:336px;color:#000">적용 반경</div>
<div class="a fld" style="left:621px;top:328px;width:40px;height:15px;background:#ffff80"><div class="t dt" style="left:2px;top:1px;color:#000">0.0</div></div>
<div class="t dt" style="left:535px;top:351px;color:#000">외부 코너</div>
<div class="t dt" style="left:535px;top:359px;color:#000">브레이크 반경</div>
<div class="a fld" style="left:621px;top:351px;width:40px;height:15px;background:#ffff80"><div class="t dt" style="left:2px;top:1px;color:#000">0.3</div></div>
<div class="t dt" style="left:535px;top:378px;color:#000">최대 깊이 변화</div>
<div class="a fld" style="left:621px;top:377px;width:40px;height:14px;background:#d4d0c8"><div class="t dt" style="left:2px;top:1px;color:#a0a0a0">0.05</div></div>
<div class="t dt" style="left:536px;top:439px;color:#000">측벽면의 가공여유</div>
<div class="a fld" style="left:628px;top:438px;width:38px;height:14px;background:#ffff80"><div class="t dt" style="left:2px;top:1px;color:#000">0.1</div></div>
<div class="t dt" style="left:536px;top:458px;color:#000">바닥면의 가공여유</div>
<div class="a fld" style="left:628px;top:458px;width:38px;height:14px;background:#ffff80"><div class="t dt" style="left:2px;top:1px;color:#000">0.0</div></div>
<div class="t dt" style="left:740px;top:216px;color:#000">윤곽 형태</div>
<div class="a fld" style="left:795px;top:216px;width:107px;height:13px;background:#fff"><div class="t dt" style="left:2px;top:0px">램프</div><div class="a cbb" style="right:1px;top:1px;width:11px;height:9px"><div class="a" style="left:3px;top:2px;width:0;height:0;border-left:3.5px solid transparent;border-right:3.5px solid transparent;border-top:4px solid #000"></div></div></div>
<div class="a" style="left:763px;top:331px;width:143px;height:93px;border:1px solid;border-color:#808080 #fff #fff #808080;box-shadow:inset 1px 1px 0 #fff,inset -1px -1px 0 #808080"></div>
<div class="t dt" style="left:767px;top:327px;background:#d4d0c8;padding:0 2px">램프 이송형태:</div>
<div class="a" style="left:770px;top:341px;width:9px;height:9px;border-radius:50%;background:#fff;border:1px solid;border-color:#808080 #fff #fff #808080;box-shadow:inset 1px 1px 0 #404040"></div>
<div class="t dt" style="left:782px;top:339px;color:#000">각도</div>
<div class="a" style="left:810px;top:341px;width:9px;height:9px;border-radius:50%;background:#fff;border:1px solid;border-color:#808080 #fff #fff #808080;box-shadow:inset 1px 1px 0 #404040"><div class="a" style="left:2.5px;top:2.5px;width:3px;height:3px;border-radius:2px;background:#000"></div></div>
<div class="t dt" style="left:822px;top:339px;color:#000">깊이</div>
<div class="a" style="left:852px;top:341px;width:9px;height:9px;border-radius:50%;background:#fff;border:1px solid;border-color:#808080 #fff #fff #808080;box-shadow:inset 1px 1px 0 #404040"></div>
<div class="t dt" style="left:863px;top:339px;color:#000">수직절</div>
<div class="t dt" style="left:769px;top:355px;color:#a0a0a0">램프 각도</div>
<div class="a fld" style="left:861px;top:354px;width:40px;height:14px;background:#d4d0c8"><div class="t dt" style="left:2px;top:1px;color:#a0a0a0">3.0</div></div>
<div class="t dt" style="left:769px;top:374px;color:#000">램프 깊이</div>
<div class="a fld" style="left:861px;top:373px;width:40px;height:15px;background:#ffff80"><div class="t dt" style="left:2px;top:1px;color:#000">5.0</div></div>
<div class="a fld" style="left:770px;top:394px;width:10px;height:10px;background:#fff"></div>
<div class="t dt" style="left:782px;top:393px;color:#000">열린윤곽 형태는 한방향으로만 진</div>
<div class="a fld" style="left:770px;top:410px;width:10px;height:10px;background:#fff"><svg class="a" style="left:1px;top:1px" width="7" height="7" viewBox="0 0 7 7"><path d="M0.5 3l2 2.5L6.5 1" fill="none" stroke="#000" stroke-width="1.5"/></svg></div>
<div class="t dt" style="left:782px;top:409px;color:#000">마지막 깊이에경로 생성</div>
<div class="a fld" style="left:770px;top:434px;width:10px;height:10px;background:#fff"></div>
<div class="t dt" style="left:782px;top:433px;color:#000">헬릭스 형태 선형출력</div>
<div class="t dt" style="left:769px;top:449px;color:#a0a0a0">선형공차:</div>
<div class="a fld" style="left:861px;top:448px;width:40px;height:15px;background:#d4d0c8"><div class="t dt" style="left:2px;top:1px;color:#a0a0a0">0.025</div></div>
<!-- buttons -->
<div class="a btn" style="left:783px;top:594px;width:36px;height:19px"></div>
<div class="a btn" style="left:823px;top:594px;width:36px;height:19px"></div>
<div class="a btn" style="left:863px;top:594px;width:36px;height:19px"></div>
<div class="a btn" style="left:905px;top:594px;width:36px;height:19px"></div>

<!-- images -->
<div class="a" style="left:538px;top:204px;width:85px;height:42px;border-radius:50%;background:#ffa2ff;mix-blend-mode:multiply"></div>
<svg class="a" style="left:580px;top:225px" width="18" height="16" viewBox="0 0 18 16"><path d="M1 1L16 11L9 10L5 15Z" fill="#2a4a2a" stroke="#1a1a1a" stroke-width="0.8"/><path d="M3 4L11 10L7 10L5 13Z" fill="#5a8a5a"/></svg>
<svg class="a" style="left:694px;top:228px" width="16" height="22" viewBox="0 0 16 22"><circle cx="6" cy="14" r="4.5" fill="none" stroke="#222" stroke-width="1"/><path d="M10.5 21V3" stroke="#0010e0" stroke-width="1.3"/><path d="M8 5L10.5 0.5L13 5Z" fill="#0010e0"/></svg>
<svg class="a" style="left:696px;top:252px" width="18" height="20" viewBox="0 0 18 20"><path d="M4 1h9v16H4z" fill="#c8b040"/><path d="M5 3l3 12M8 2l3 13M11 2l1 6" stroke="#302810" stroke-width="1.2"/><path d="M0 17.5h18" stroke="#e02020" stroke-width="1.2"/><circle cx="8.5" cy="17.5" r="1.3" fill="#40e040"/></svg>
<!-- block image -->
<svg class="a" style="left:759px;top:239px" width="149" height="88" viewBox="0 0 149 88">
<defs>
<linearGradient id="gt" x1="0" y1="0" x2="0" y2="1"><stop offset="0" stop-color="#c8c8c8"/><stop offset="0.35" stop-color="#f4f4f4"/><stop offset="0.7" stop-color="#e0e0e0"/><stop offset="1" stop-color="#fafafa"/></linearGradient>
<linearGradient id="gl" x1="0" y1="0" x2="1" y2="0"><stop offset="0" stop-color="#808080"/><stop offset="1" stop-color="#a8a8a8"/></linearGradient>
<linearGradient id="gr" x1="0" y1="0" x2="1" y2="0"><stop offset="0" stop-color="#d8d8d8"/><stop offset="1" stop-color="#a0a0a0"/></linearGradient>
<linearGradient id="gd" x1="0" y1="0" x2="1" y2="0"><stop offset="0" stop-color="#7a5a10"/><stop offset="0.5" stop-color="#e8c040"/><stop offset="1" stop-color="#8a6a10"/></linearGradient>
</defs>
<path d="M1 1H148V23L95 44L1 23Z" fill="url(#gt)"/>
<path d="M1 23L95 44V77L1 58Z" fill="url(#gl)"/>
<path d="M95 44L148 23V63L95 77Z" fill="url(#gr)"/>
<path d="M2 45L76 49.5" stroke="#e8e040" stroke-width="1.5"/>
<path d="M96 76L148 45" stroke="#e8e040" stroke-width="1.5"/>
<rect x="76" y="1" width="14" height="46" fill="url(#gd)"/>
<path d="M77 8l12 8M77 16l12 8M77 24l12 8M77 32l12 8" stroke="#5a4008" stroke-width="1.2"/>
<path d="M70 55L93 46M70 87L95 79" stroke="#e02020" stroke-width="1.3"/>
<path d="M83 51V82" stroke="#e02020" stroke-width="1"/>
<path d="M80.5 55L83 51L85.5 55M80.5 78L83 82L85.5 78" fill="none" stroke="#e02020" stroke-width="1"/>
</svg>
<!-- pocket image -->
<svg class="a" style="left:673px;top:432px" width="61" height="45" viewBox="0 0 61 45">
<defs><linearGradient id="gp" x1="0" y1="0" x2="1" y2="0"><stop offset="0" stop-color="#808080"/><stop offset="0.5" stop-color="#b0b0b0"/><stop offset="1" stop-color="#808080"/></linearGradient>
<pattern id="hz" width="6" height="6" patternUnits="userSpaceOnUse" patternTransform="rotate(45)"><rect width="3" height="6" fill="#111"/><rect x="3" width="3" height="6" fill="#f0f020"/></pattern></defs>
<rect x="0" y="7" width="61" height="38" fill="url(#gp)"/>
<rect x="11" y="7" width="39" height="27" fill="#d4d0c8"/>
<rect x="11" y="7" width="6" height="28" fill="url(#hz)"/>
<rect x="44" y="7" width="6" height="28" fill="url(#hz)"/>
<rect x="25" y="0" width="11" height="25" fill="url(#gd)"/>
<path d="M26 4l9 5M26 11l9 5M26 18l9 5" stroke="#5a4008" stroke-width="1"/>
<path d="M18 17h6M37 17h6" stroke="#2080e0" stroke-width="1.5"/>
<path d="M20 15l-2 2 2 2M22 15l2 2-2 2M39 15l-2 2 2 2M41 15l2 2-2 2" fill="none" stroke="#2080e0" stroke-width="1"/>
</svg>
<!-- button icons -->
<svg class="a" style="left:794px;top:596px" width="15" height="14" viewBox="0 0 15 14"><path d="M1 7l4 5L14 2" fill="none" stroke="#208a20" stroke-width="3"/><path d="M1.5 7l3.5 4.3L13.5 2.3" fill="none" stroke="#60d040" stroke-width="1.3"/></svg>
<svg class="a" style="left:834px;top:596px" width="14" height="14" viewBox="0 0 14 14"><path d="M2 2L12 12M12 2L2 12" stroke="#c02010" stroke-width="4"/><path d="M2.5 2.5L11.5 11.5M11.5 2.5L2.5 11.5" stroke="#f05030" stroke-width="2"/></svg>
<svg class="a" style="left:873px;top:595px" width="16" height="16" viewBox="0 0 16 16"><circle cx="8" cy="8" r="7.5" fill="#909090"/><path d="M8 3.5v9M3.5 8h9" stroke="#e8e8e8" stroke-width="3"/></svg>
<svg class="a" style="left:916px;top:595px" width="14" height="16" viewBox="0 0 14 16"><path d="M3 5a4 3.6 0 1 1 6 3c-1.5 1-2 1.5-2 3" fill="none" stroke="#505050" stroke-width="3.6" stroke-linecap="round"/><path d="M3 5a4 3.6 0 1 1 6 3c-1.5 1-2 1.5-2 3" fill="none" stroke="#fff" stroke-width="1.8" stroke-linecap="round"/><circle cx="7" cy="14" r="1.8" fill="#fff" stroke="#505050" stroke-width="0.9"/></svg>
<svg class="a" style="left:939px;top:610px" width="8" height="8" viewBox="0 0 8 8"><path d="M7 1L1 7M7 4L4 7" stroke="#808080" stroke-width="1"/><path d="M7 2L2 7M7 5L5 7" stroke="#fff" stroke-width="1"/></svg>
<!-- LEFT --><svg class="a" style="left:246px;top:123px" width="34" height="9" viewBox="0 0 34 9"><path d="M1 2h7l-3.5 4z" fill="#555"/><path d="M14 1h5M15 1v4h3V1M13 5h7M16.5 5v3" stroke="#555" stroke-width="1" fill="none"/><path d="M23 1.5l6 6M29 1.5l-6 6" stroke="#555" stroke-width="1.2"/></svg>
<svg class="a" style="left:0;top:0" width="200" height="190" viewBox="0 0 200 190"><path d="M3 158v8l6-4z" fill="#90b0a0"/><path d="M8 162l3 6 1-2 2 2 1-1-2-2 2-1z" fill="#333"/>
<path d="M18 158l5 5M23 158l-5 5" stroke="#e06060" stroke-width="1.3"/><path d="M24 162l3 6 1-2 2 2 1-1-2-2 2-1z" fill="#333"/>
<rect x="33" y="155" width="1" height="14" fill="#c8c8c8"/>
<path d="M40 158h3v3h-1v7" stroke="#c0a060" fill="none" stroke-width="1.2"/><path d="M42 162v6l5-3z" fill="#90b0a0"/>
<path d="M53 158h3v3h-1v7" stroke="#c0a060" fill="none" stroke-width="1.2"/><path d="M56 163l5 5M61 163l-5 5" stroke="#e06060" stroke-width="1.2"/>
<rect x="67" y="155" width="1" height="14" fill="#c8c8c8"/>
<path d="M72 159c3-2 5 2 10 0M72 162c3-2 5 2 10 0M72 165c3-2 5 2 10 0" stroke="#5080b0" stroke-width="1.3" fill="none"/>
<rect x="87" y="158" width="6" height="6" fill="#e0c890"/><rect x="90" y="162" width="6" height="6" fill="#f0f0f0" stroke="#aaa" stroke-width="0.6"/>
<path d="M100 159c3-2 5 2 10 0M100 162c3-2 5 2 10 0M100 165c3-2 5 2 10 0" stroke="#7090a0" stroke-width="1.3" fill="none"/><rect x="107" y="164" width="4" height="4" fill="#e0c890"/>
<text x="118" y="167" font-size="9" font-family="Liberation Sans" fill="#9ab0c8">G1</text>
<g transform="translate(6,0)"><path d="M126 158h3v3h-1v7" stroke="#c0a060" fill="none" stroke-width="1.2"/><path d="M129 165h5l-2-2M134 165l-2 2" stroke="#e06060" fill="none"/></g>
<rect x="147" y="155" width="1" height="14" fill="#c8c8c8"/>
<g transform="translate(8,0)"><path d="M144 167l7-8M148 168l5-6" stroke="#e08080" stroke-width="1.5"/><path d="M150 158l2-1 1 2" stroke="#c0a060" fill="none"/></g>
<rect x="166" y="155" width="1" height="14" fill="#c8c8c8"/>
<circle cx="176.5" cy="163" r="5.5" fill="#a8c4e0" stroke="#7090b0"/><text x="174" y="166" font-size="8" font-weight="bold" font-family="Liberation Sans" fill="#fff">?</text><rect x="4" y="177" width="8" height="7" fill="#e0c890"/><path d="M5.5 177v-2a2.5 2.5 0 0 1 5 0v2" fill="none" stroke="#e0c890" stroke-width="1.3"/>
<path d="M18 176c3-2 5 2 10 0M18 179c3-2 5 2 10 0M18 182c3-2 5 2 10 0" stroke="#a0b0c0" stroke-width="1.1" fill="none"/>
<path d="M34 184v-6a3 3 0 0 1 6 0v6l-1.5-1-1.5 1-1.5-1z" fill="#d0d0d0" stroke="#aaa" stroke-width="0.6"/>
<g transform="translate(1,0)"><rect x="47" y="172" width="1" height="14" fill="#c8c8c8"/></g>
<g transform="translate(2,0)"><path d="M52 176h7l-3.5 5z" fill="#e0806a"/></g>
<g transform="translate(1,0)"><path d="M67 182h7l-3.5-5z" fill="#e0806a"/></g>
<g transform="translate(3,0)"><path d="M80 176h5v6h4l-2-2M89 182l-2 2" fill="none" stroke="#e0806a" stroke-width="1.3"/></g>
<g transform="translate(5,0)"><path d="M93 179l4-4 4 4zM93 181l4 4 4-4z" fill="#e0806a"/></g>
<g transform="translate(6,0)"><rect x="106" y="172" width="1" height="14" fill="#c8c8c8"/></g>
<g transform="translate(4,0)"><rect x="112" y="174" width="12" height="12" fill="#d0d0d0"/><path d="M115 177l4 7 1-2 2 2 1-1-2-2 2-1z" fill="#333"/></g>
<g transform="translate(7,0)"><rect x="127.5" y="175.5" width="7" height="6" fill="none" stroke="#b0b0b0"/><circle cx="134" cy="182" r="3" fill="none" stroke="#b0b0b0"/></g>
<g transform="translate(7,0)"><path d="M141 184h3v-4h3v-4h4" fill="none" stroke="#b0b0b0"/></g>
<g transform="translate(8,0)"><rect x="153" y="172" width="1" height="14" fill="#c8c8c8"/></g>
<g transform="translate(9,0)"><path d="M158 176h8l-4 4 4 4h-8l4-4z" fill="#b0b8c0" stroke="#707880" stroke-width="0.8"/></g>
<g transform="translate(9,0)"><circle cx="175" cy="178" r="3.5" fill="#fff" stroke="#333" stroke-width="1.2"/><path d="M172 177h6" stroke="#333"/><path d="M177 184l5-7" stroke="#e0a030" stroke-width="1.5"/></g></svg>
<svg class="a" style="left:0;top:0" width="280" height="330" viewBox="0 0 280 330"><path d="M23.5 211V247M35.5 212V240M35.5 217.5H43M35.5 228.3H44M35.5 239H44M36 265V313.5H43M48.5 266V303.4M48.5 271.5H55M48.5 282H56M48.5 292.7H56M48.5 303.4H56M14 197H17M26.5 207.7H30M26.5 250.5H30M39 261H42.5" stroke="#707070" fill="none"/><rect x="7.5" y="194" width="6.5" height="6.5" fill="#e8e8e8" stroke="#222" stroke-width="1"/><path d="M9.0 197.3h4" stroke="#111" stroke-width="1.2"/><rect x="20" y="204.7" width="6.5" height="6.5" fill="#e8e8e8" stroke="#222" stroke-width="1"/><path d="M21.5 208.0h4" stroke="#111" stroke-width="1.2"/><rect x="20" y="247.5" width="6.5" height="6.5" fill="#e8e8e8" stroke="#222" stroke-width="1"/><path d="M21.5 250.8h4" stroke="#111" stroke-width="1.2"/><rect x="33" y="258" width="6.5" height="6.5" fill="#e8e8e8" stroke="#222" stroke-width="1"/><path d="M34.5 261.3h4" stroke="#111" stroke-width="1.2"/><g fill="#30b0f0" stroke="#1070b0" stroke-width="0.6"><rect x="17" y="191" width="5" height="5" rx="1"/><rect x="22.5" y="191" width="5" height="5" rx="1"/><rect x="17" y="196.5" width="5" height="5" rx="1"/><rect x="22.5" y="196.5" width="5" height="5" rx="1"/></g><path d="M30.5 211.5h9.5M32.5 211v-4M35 211v-8M37.5 211v-5" stroke="#1020c0" stroke-width="1.5"/><path d="M43 214h4l1 1h6v7h-11z" fill="#e0d8a0" stroke="#a09860" stroke-width="0.7"/><path d="M45 224h6v7l-3 3-3-3z" fill="#2030c0" stroke="#101870" stroke-width="0.6"/><path d="M46 231l4-5" stroke="#8090ff" stroke-width="0.7"/><path d="M48 234.5l5 5-5 5-5-5z" fill="#fff" stroke="#111" stroke-width="1.1"/><g fill="#20b0f0"><circle cx="33" cy="247.5" r="2.6"/><circle cx="38.5" cy="247.5" r="2.6"/><circle cx="33" cy="253" r="2.6"/><circle cx="38.5" cy="253" r="2.6"/></g><rect x="54.5" y="255.5" width="58" height="10" fill="#f2f2f2"/><path d="M43 257h10v8h-10z" fill="#203818"/><path d="M46 264l5-6 2 2-4 5z" fill="#e8e040"/><path d="M44 260l2 2 3-3" stroke="#40c0a0" fill="none"/><path d="M55.5 267.5h3l1 1h6v8.5h-10z" fill="#d8d8d8" stroke="#111" stroke-width="0.9"/><path d="M58 277h5v6l-2.5 3-2.5-3z" fill="#2030c0" stroke="#101870" stroke-width="0.6"/><rect x="55" y="288" width="10" height="10" fill="#101808"/><path d="M57 290v6h6v-7" stroke="#70a040" fill="none" stroke-width="0.8"/><rect x="58" y="290" width="2" height="2" fill="#60e060"/><path d="M55 300c3-2 7 2 10 0M55 303c3-2 7 2 10 0M55 306c3-2 7 2 10 0" stroke="#111" stroke-width="1.4" fill="none"/><path d="M43 308.5v10l10-5z" fill="#e00000"/></svg>
<div class="t lt" style="left:30.75px;top:190px;transform:scaleX(0.964);transform-origin:0 0">Machine_-1</div>
<div class="t lt" style="left:44.3px;top:201px;transform:scaleX(0.948);transform-origin:0 0">속성 - Mill Default MM</div>
<div class="t lt" style="left:56.8px;top:212px;transform:scaleX(0.839);transform-origin:0 0">파일</div>
<div class="t lt" style="left:57.8px;top:222px;transform:scaleX(0.717);transform-origin:0 0">공구 설정</div>
<div class="t lt" style="left:57.8px;top:233px;transform:scaleX(0.757);transform-origin:0 0">공작물 설정</div>
<div class="t lt" style="left:43.25px;top:244px;transform:scaleX(0.983);transform-origin:0 0">P/T_-1</div>
<div class="t lt" style="left:56.8px;top:254px;transform:scaleX(0.932);transform-origin:0 0">1 - 윤곽 (램프)</div>
<div class="t lt" style="left:70.3px;top:266px;transform:scaleX(0.667);transform-origin:0 0">조건</div>
<div class="t lt" style="left:69.3px;top:276px;transform:scaleX(0.929);transform-origin:0 0">#3 - M8.00 평엔드밀 - 8R EM</div>
<div class="t lt" style="left:69.3px;top:287px;transform:scaleX(0.934);transform-origin:0 0">도형 - (1) 체인</div>
<div class="t lt" style="left:69.3px;top:297px;transform:scaleX(0.847);transform-origin:0 0">5.1K</div><!-- /LEFT -->
<!-- MISC --><svg class="a" style="left:309px;top:120px" width="45" height="45" viewBox="0 0 45 45"><path d="M10 32V8" stroke="#20c020" stroke-width="1.5"/><path d="M8.5 16l1.5-6 1.5 6z" fill="#40e040"/><path d="M7.5 1.5l2.5 3.5 2.5-3.5M10 5v3" stroke="#40d040" stroke-width="1.4" fill="none"/><path d="M10 32H31" stroke="#c02020" stroke-width="1.5"/><path d="M22 30.5l7 1.5-7 1.5z" fill="#e03030"/><path d="M35.5 30l4 5.5M39.5 30l-4 5.5" stroke="#e02020" stroke-width="1.5"/><text x="10" y="41" text-anchor="middle" font-size="9" font-weight="bold" font-family="Liberation Sans" fill="#fff">C</text></svg>
<svg class="a" style="left:1213px;top:120px" width="45" height="45" viewBox="0 0 45 45"><path d="M10 32V8" stroke="#20c020" stroke-width="1.5"/><path d="M8.5 16l1.5-6 1.5 6z" fill="#40e040"/><path d="M7.5 1.5l2.5 3.5 2.5-3.5M10 5v3" stroke="#40d040" stroke-width="1.4" fill="none"/><path d="M10 32H31" stroke="#c02020" stroke-width="1.5"/><path d="M22 30.5l7 1.5-7 1.5z" fill="#e03030"/><path d="M35.5 30l4 5.5M39.5 30l-4 5.5" stroke="#e02020" stroke-width="1.5"/><text x="10" y="41" text-anchor="middle" font-size="9" font-weight="bold" font-family="Liberation Sans" fill="#fff">T</text></svg>
<svg class="a" style="left:309px;top:593.5px" width="45" height="45" viewBox="0 0 45 45"><path d="M10 32V8" stroke="#20c020" stroke-width="1.5"/><path d="M8.5 16l1.5-6 1.5 6z" fill="#40e040"/><path d="M7.5 1.5l2.5 3.5 2.5-3.5M10 5v3" stroke="#40d040" stroke-width="1.4" fill="none"/><path d="M10 32H31" stroke="#c02020" stroke-width="1.5"/><path d="M22 30.5l7 1.5-7 1.5z" fill="#e03030"/><path d="M35.5 30l4 5.5M39.5 30l-4 5.5" stroke="#e02020" stroke-width="1.5"/><text x="10" y="41" text-anchor="middle" font-size="9" font-weight="bold" font-family="Liberation Sans" fill="#fff"></text></svg>
<div class="t" style="left:295px;top:646px;font-size:9px;font-weight:bold;color:#fff">평면</div>
<svg class="a" style="left:1178px;top:636px" width="70" height="22" viewBox="0 0 70 22"><path d="M2.5 4v16M66.5 4v16M2.5 12h64" stroke="#ddd" stroke-width="1"/></svg>
<div class="t" style="left:1180px;top:638px;width:65px;text-align:center;font-size:9px;font-weight:bold;color:#fff;line-height:10px">16.897 mm</div>
<div class="t" style="left:1180px;top:648px;width:65px;text-align:center;font-size:8.5px;font-weight:bold;color:#fff;line-height:10px">Metric</div>
<div class="a" style="left:282px;top:666px;width:68px;height:14px;background:#fafafa;border-right:1px solid #ccc"></div>
<div class="t" style="left:286px;top:669px;font-size:8.5px;color:#555">메인 뷰시트</div>
<div class="a" style="left:775px;top:682px;width:505px;height:15px;background:#404040"></div>
<div class="a" style="left:776px;top:682px;width:16px;height:15px;background:#fff"><div class="t" style="left:0;top:2px;width:100%;text-align:center;font-size:9px;color:#333;line-height:12px">3D</div></div>
<div class="a" style="left:793px;top:682px;width:43px;height:15px;background:#fff"><div class="t" style="left:0;top:2px;width:100%;text-align:center;font-size:9px;color:#333;line-height:12px">그래픽뷰</div></div>
<div class="a" style="left:838px;top:682px;width:28px;height:15px;background:#fff"><div class="t" style="left:0;top:2px;width:100%;text-align:center;font-size:9px;color:#333;line-height:12px">WCS</div></div>
<div class="a" style="left:868px;top:682px;width:18px;height:15px;background:#fff"><div class="t" style="left:0;top:2px;width:100%;text-align:center;font-size:9px;color:#333;line-height:12px">평면</div></div>
<div class="a" style="left:889px;top:682px;width:7px;height:15px;background:#d4d0c8"><div class="t" style="left:0;top:2px;width:100%;text-align:center;font-size:9px;color:#333;line-height:12px">z</div></div>
<div class="a" style="left:897px;top:682px;width:53px;height:15px;background:#ffff80;border:1px solid;border-color:#808080 #fff #fff #808080"><div class="t" style="left:2px;top:2px;font-size:8.5px;color:#000;line-height:11px">0.0</div><div class="a cbb" style="right:1px;top:1px;width:11px;height:12px"><div class="a" style="left:2px;top:4px;border-left:3px solid transparent;border-right:3px solid transparent;border-top:4px solid #000"></div></div></div>
<div class="a" style="left:953px;top:682px;width:20px;height:15px;background:#fff"><div class="a" style="left:2px;top:11px;width:16px;height:3px;background:#40e0a0"></div><div class="a" style="left:7px;top:2px;width:6px;height:6px;border:1px solid #555;background:#eee"></div></div>
<div class="a" style="left:975px;top:682px;width:20px;height:15px;background:#fff"><div class="a" style="left:2px;top:11px;width:16px;height:3px;background:#808080"></div><div class="a" style="left:7px;top:2px;width:6px;height:6px;border:1px solid #555;background:#eee"></div></div>
<div class="a" style="left:997px;top:682px;width:20px;height:15px;background:#fff"><div class="a" style="left:2px;top:11px;width:16px;height:3px;background:#f08040"></div><div class="a" style="left:7px;top:2px;width:6px;height:6px;border:1px solid #555;background:#eee"></div></div>
<div class="a" style="left:1018px;top:682px;width:20px;height:15px;background:#d4d0c8"><div class="t" style="left:0;top:2px;width:100%;text-align:center;font-size:8px;color:#444;line-height:12px">레벨</div></div>
<div class="a" style="left:1039px;top:682px;width:64px;height:15px;background:#fff;border:1px solid;border-color:#808080 #fff #fff #808080"><div class="t" style="left:2px;top:2px;font-size:8.5px;color:#000;line-height:11px">1</div><div class="a cbb" style="right:1px;top:1px;width:11px;height:12px"><div class="a" style="left:2px;top:4px;border-left:3px solid transparent;border-right:3px solid transparent;border-top:4px solid #000"></div></div></div>
<div class="a" style="left:1107px;top:682px;width:22px;height:15px;background:#e0e0e0"><div class="t" style="left:0;top:2px;width:100%;text-align:center;font-size:8px;color:#444;line-height:12px">속성</div></div>
<div class="a" style="left:1131px;top:682px;width:24px;height:15px;background:#fff"><div class="t" style="left:3px;top:1px;font-size:11px;color:#000">*</div><div class="a" style="left:17px;top:7px;border-left:2px solid transparent;border-right:2px solid transparent;border-top:2px solid #666"></div></div>
<div class="a" style="left:1156px;top:682px;width:38px;height:15px;background:#fff"><div class="a" style="left:3px;top:7px;width:22px;height:2px;background:#000"></div><div class="a" style="left:30px;top:7px;border-left:2px solid transparent;border-right:2px solid transparent;border-top:2px solid #666"></div></div>
<div class="a" style="left:1195px;top:682px;width:42px;height:15px;background:#fff"><div class="a" style="left:3px;top:7px;width:27px;height:1px;background:#888"></div><div class="a" style="left:35px;top:7px;border-left:2px solid transparent;border-right:2px solid transparent;border-top:2px solid #666"></div></div>
<div class="a" style="left:1239px;top:682px;width:27px;height:15px;background:#fff"><div class="t" style="left:0;top:2px;width:100%;text-align:center;font-size:8px;color:#444;line-height:12px">그룹</div></div>
<div class="a" style="left:1267px;top:682px;width:13px;height:15px;background:#fff"><div class="t" style="left:0;top:2px;width:100%;text-align:center;font-size:9px;color:#444;line-height:12px">?</div></div>
<svg class="a" style="left:0;top:0" width="1280" height="720" viewBox="0 0 1280 720"><path d="M1266 95h1M1269 95h1M1272 95h1M1275 95h1" stroke="#999"/><path d="M1264 102l5-2 5 2v6l-5 2-5-2z" fill="#f4f4f4" stroke="#707878" stroke-width="0.8"/><path d="M1264 102l5 2 5-2-5-2z" fill="#509080"/><path d="M1272 100l3-2" stroke="#509080" stroke-width="1.2"/><rect x="1264.5" y="116.5" width="7" height="7" fill="#e8c888" stroke="#777" stroke-width="0.7"/><path d="M1272 118l3-2v8l-3-2" fill="none" stroke="#777"/><circle cx="1269" cy="134.5" r="4.5" fill="none" stroke="#8098b8"/><path d="M1269 132.5v4M1267 134.5h4" stroke="#8098b8"/><path d="M1266 335h1M1269 335h1M1272 335h1M1275 335h1" stroke="#999"/><path d="M1264 348l5-6M1267 349l5-6" stroke="#d8a020" stroke-width="2.5"/><path d="M1264 348l2 1" stroke="#c04030" stroke-width="1.5"/><path d="M1264 354v9M1264 355h8M1272 354v3" stroke="#405060" stroke-width="1.2" fill="none"/><path d="M1275 356.9l-2.5 3.5h2.5l-2.5 4" stroke="#e8b020" fill="none" stroke-width="1.6"/><path d="M1264 378l4-6 5 1-2 6z" fill="#a0b0b0" stroke="#708080" stroke-width="0.6"/><path d="M1275 372.4l-2.5 3.5h2.5l-2.5 4" stroke="#e8b020" fill="none" stroke-width="1.6"/><path d="M1266.5 385v5M1264 387.5h5" stroke="#2a60b0" stroke-width="1.4"/><path d="M1275 388l-2.5 3.5h2.5l-2.5 4" stroke="#e8b020" fill="none" stroke-width="1.6"/><path d="M1264 408l6-7" stroke="#6080a0" stroke-width="1.2"/><circle cx="1264.5" cy="408" r="1.2" fill="#3a70b0"/><circle cx="1270" cy="401" r="1.2" fill="#3a70b0"/><path d="M1275 402.4l-2.5 3.5h2.5l-2.5 4" stroke="#e8b020" fill="none" stroke-width="1.6"/><circle cx="1268" cy="419" r="4" fill="none" stroke="#708090" stroke-width="1.1"/><path d="M1275 418l-2.5 3.5h2.5l-2.5 4" stroke="#e8b020" fill="none" stroke-width="1.6"/><path d="M1264 439c0-5 3-7 7-7" fill="none" stroke="#708090" stroke-width="1.1"/><path d="M1275 432.4l-2.5 3.5h2.5l-2.5 4" stroke="#e8b020" fill="none" stroke-width="1.6"/><path d="M1264 452l4-6 5 1-2 6z" fill="#509080" stroke="#306050" stroke-width="0.6"/><path d="M1275 446.9l-2.5 3.5h2.5l-2.5 4" stroke="#e8b020" fill="none" stroke-width="1.6"/><path d="M1264 461l4-2 4 2v5l-4 2-4-2z" fill="#d8b070" stroke="#906830" stroke-width="0.6"/><path d="M1275 461.3l-2.5 3.5h2.5l-2.5 4" stroke="#e8b020" fill="none" stroke-width="1.6"/><circle cx="1268" cy="477" r="4" fill="none" stroke="#708090" stroke-width="1"/><path d="M1264 477h8M1268 473v8" stroke="#708090" stroke-width="0.6"/><path d="M1275 474.7l-2.5 3.5h2.5l-2.5 4" stroke="#e8b020" fill="none" stroke-width="1.6"/><circle cx="1268.5" cy="492" r="4.5" fill="#f0c0b0" stroke="#e0a090" stroke-width="0.8"/><path d="M1266 489l5 5" stroke="#e08080" stroke-width="1"/><rect x="1268" y="506" width="5" height="5" fill="#8050a0"/><rect x="1264.5" y="510.5" width="4" height="4" fill="#fff" stroke="#aaa" stroke-width="0.6"/><path d="M1275 509l-2.5 3.5h2.5l-2.5 4" stroke="#e8b020" fill="none" stroke-width="1.6"/><path d="M1264 521v11" stroke="#203060" stroke-width="1.2"/><rect x="1265" y="522" width="2" height="2" fill="#3050a0"/><rect x="1265" y="526" width="2" height="2" fill="#3050a0"/><rect x="1265" y="530" width="2" height="2" fill="#3050a0"/><path d="M1275 524.7l-2.5 3.5h2.5l-2.5 4" stroke="#e8b020" fill="none" stroke-width="1.6"/><path d="M1264 536v11" stroke="#203060" stroke-width="1.2"/><rect x="1265" y="537" width="2" height="2" fill="#3050a0"/><rect x="1265" y="541" width="2" height="2" fill="#3050a0"/><circle cx="1270" cy="538" r="2" fill="none" stroke="#708090"/><path d="M1275 539l-2.5 3.5h2.5l-2.5 4" stroke="#e8b020" fill="none" stroke-width="1.6"/><rect x="1264" y="557" width="2.5" height="2.5" fill="#c03030"/><rect x="1267" y="557" width="2.5" height="2.5" fill="#e0a020"/><rect x="1270" y="557" width="2.5" height="2.5" fill="#3050a0"/><rect x="1264" y="560" width="2.5" height="2.5" fill="#40a040"/><rect x="1267" y="560" width="2.5" height="2.5" fill="#8030a0"/><path d="M1275 559l-2.5 3.5h2.5l-2.5 4" stroke="#e8b020" fill="none" stroke-width="1.6"/><path d="M1264 573l5-2 5 2-5 2z" fill="#3a70b0"/><path d="M1264 576l5-2 5 2-5 2z" fill="#2a60a0"/><path d="M1264 579l5-2 5 2-5 2z" fill="#3a80c0"/><path d="M1275 573.5l-2.5 3.5h2.5l-2.5 4" stroke="#e8b020" fill="none" stroke-width="1.6"/><circle cx="1268.5" cy="590" r="4.5" fill="#f0d0c0" stroke="#e0b0a0" stroke-width="0.8"/><path d="M1266 587l5 5" stroke="#e09090" stroke-width="1"/><path d="M1262 502h16M1262 552h16M1262 601h16" stroke="#d0d0d0"/></svg><!-- /MISC -->
<!-- MENU --><div class="t" style="left:10.0px;top:22px;font-size:9px;line-height:12px;color:#1a1a1a;transform:scaleX(0.885);transform-origin:0 0">F:파일</div>
<div class="t" style="left:42.0px;top:22px;font-size:9px;line-height:12px;color:#1a1a1a;transform:scaleX(0.867);transform-origin:0 0">E:수정</div>
<div class="t" style="left:74.0px;top:22px;font-size:9px;line-height:12px;color:#1a1a1a;transform:scaleX(0.903);transform-origin:0 0">V:뷰</div>
<div class="t" style="left:98.5px;top:22px;font-size:9px;line-height:12px;color:#1a1a1a;transform:scaleX(0.905);transform-origin:0 0">A:측정</div>
<div class="t" style="left:131.5px;top:22px;font-size:9px;line-height:12px;color:#1a1a1a;transform:scaleX(0.875);transform-origin:0 0">C:그리기</div>
<div class="t" style="left:172.0px;top:22px;font-size:9px;line-height:12px;color:#1a1a1a;transform:scaleX(0.859);transform-origin:0 0">S:솔리드</div>
<div class="t" style="left:212.0px;top:22px;font-size:9px;line-height:12px;color:#1a1a1a;transform:scaleX(0.872);transform-origin:0 0">P:모델 수정</div>
<div class="t" style="left:262.0px;top:22px;font-size:9px;line-height:12px;color:#1a1a1a;transform:scaleX(0.849);transform-origin:0 0">X:이동</div>
<div class="t" style="left:294.0px;top:22px;font-size:9px;line-height:12px;color:#1a1a1a;transform:scaleX(0.897);transform-origin:0 0">M:머신 형태</div>
<div class="t" style="left:346.5px;top:22px;font-size:9px;line-height:12px;color:#1a1a1a;transform:scaleX(0.895);transform-origin:0 0">T:가공경로</div>
<div class="t" style="left:394.0px;top:22px;font-size:9px;line-height:12px;color:#1a1a1a;transform:scaleX(0.870);transform-origin:0 0">R:화면</div>
<div class="t" style="left:427.0px;top:22px;font-size:9px;line-height:12px;color:#1a1a1a;transform:scaleX(0.757);transform-origin:0 0">ART</div>
<div class="t" style="left:449.5px;top:22px;font-size:9px;line-height:12px;color:#1a1a1a;transform:scaleX(0.868);transform-origin:0 0">AI 솔루션</div>
<div class="t" style="left:492.0px;top:22px;font-size:9px;line-height:12px;color:#1a1a1a;transform:scaleX(0.912);transform-origin:0 0">I:설정</div>
<div class="t" style="left:522.0px;top:22px;font-size:9px;line-height:12px;color:#1a1a1a;transform:scaleX(0.896);transform-origin:0 0">H:도움말</div><!-- /MENU -->
</body></html>
